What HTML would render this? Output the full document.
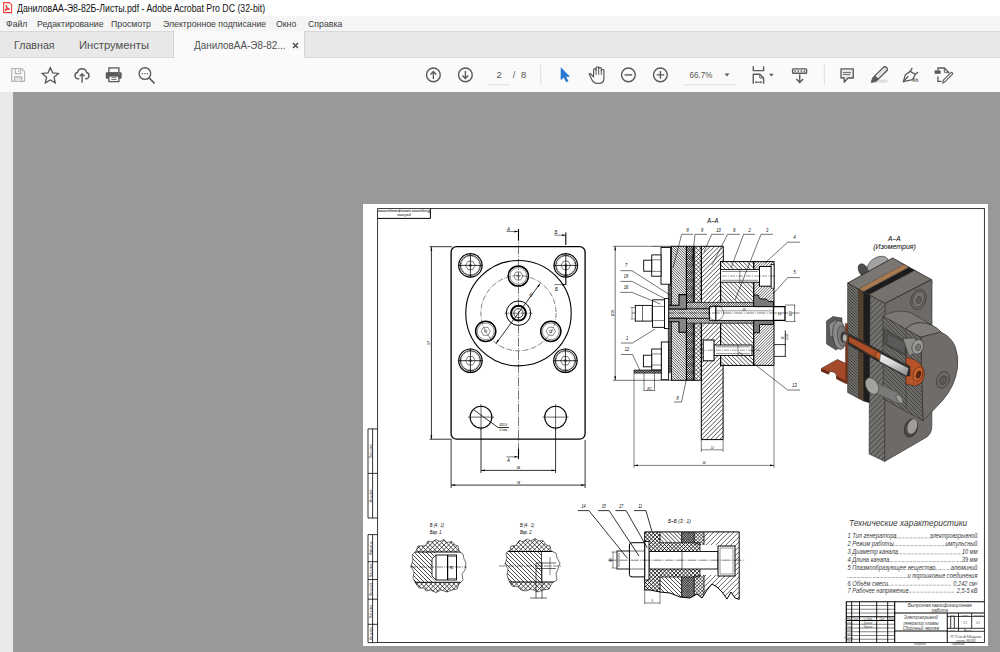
<!DOCTYPE html>
<html><head><meta charset="utf-8">
<style>
html,body{margin:0;padding:0;width:1000px;height:652px;overflow:hidden;background:#999;font-family:"Liberation Sans",sans-serif;}
.a{position:absolute;}
.t{position:absolute;white-space:nowrap;transform-origin:0 0;}
#titlebar{left:0;top:0;width:1000px;height:16px;background:#fff;}
#menubar{left:0;top:16px;width:1000px;height:15px;background:#f5f5f5;}
#tabbar{left:0;top:31px;width:1000px;height:28px;background:#fafafa;}
#tabinact{left:0;top:0;width:174px;height:26px;background:#e8e8e8;border-top:1px solid #d8d8d8;border-bottom:1px solid #d8d8d8;border-right:1px solid #d4d4d4;box-sizing:border-box;height:27px}
#tabinact2{left:304px;top:0;width:696px;height:27px;background:#e8e8e8;border-top:1px solid #d8d8d8;border-bottom:1px solid #d8d8d8;border-left:1px solid #d4d4d4;box-sizing:border-box;}
#toolbar{left:0;top:59px;width:1000px;height:33px;background:#fafafa;}
#leftpanel{left:0;top:92px;width:13px;height:560px;background:#e9e9e9;}
#doc{left:13px;top:92px;width:987px;height:560px;background:#999;}
#page{left:363px;top:204px;width:625px;height:442px;background:#fff;}
.menu{font-size:9.6px;color:#3c3c3c;top:18.3px;transform:scaleX(0.91);}
.tab{font-size:11px;color:#505050;top:38.8px;}
</style></head><body>
<div id="titlebar" class="a">
  <svg class="a" style="left:0;top:0" width="16" height="16" viewBox="0 0 16 16">
    <path d="M3.6 2.6 H9.3 L11.6 4.9 V12.6 H3.6 Z" fill="#fff" stroke="#f0423a" stroke-width="1.1"/>
    <path d="M6 5.2 C6.4 7.5 7.4 8.8 9.6 9.2 C8 9 6.4 9.6 5.3 10.6 C6.5 9 7 7.5 6.6 5.4 Z" fill="none" stroke="#ee3a30" stroke-width="1.1" stroke-linejoin="round"/>
  </svg>
  <span class="t" style="left:17px;top:2.5px;font-size:10px;color:#111;transform:scaleX(0.875)">ДаниловАА-Э8-82Б-Листы.pdf - Adobe Acrobat Pro DC (32-bit)</span>
</div>
<div id="menubar" class="a"></div>
<span class="t menu" style="left:5.5px">Файл</span>
<span class="t menu" style="left:37px">Редактирование</span>
<span class="t menu" style="left:111px">Просмотр</span>
<span class="t menu" style="left:163px">Электронное подписание</span>
<span class="t menu" style="left:276px">Окно</span>
<span class="t menu" style="left:307.5px">Справка</span>

<div id="tabbar" class="a">
  <div id="tabinact" class="a"></div>
  <div id="tabinact2" class="a"></div>
</div>
<span class="t tab" style="left:13.5px;transform:scaleX(0.97)">Главная</span>
<span class="t tab" style="left:79px;transform:scaleX(1.02)">Инструменты</span>
<span class="t tab" style="left:193.5px;transform:scaleX(0.9)">ДаниловАА-Э8-82...</span>
<svg class="a" style="left:290px;top:40px" width="11" height="11"><path d="M3 3 L8 8 M8 3 L3 8" stroke="#505050" stroke-width="1.5"/></svg>

<div id="toolbar" class="a"></div>
<div id="leftpanel" class="a"></div>
<div id="doc" class="a"></div>
<div id="page" class="a"></div>

<!-- TOOLBAR ICONS -->
<svg class="a" style="left:0;top:0" width="1000" height="92" viewBox="0 0 1000 92" id="tbicons">
<g fill="none" stroke="#b3b3b3" stroke-width="1.2" stroke-linejoin="round">
  <path d="M11.7 68.5 H21.4 L24.6 71.7 V81.3 H11.7 Z"/>
  <path d="M15.2 68.5 V73.7 H20.7 V68.5"/>
  <path d="M14.6 81.3 V76.8 H21.7 V81.3" fill="#e2e2e2"/>
</g>
<rect x="18" y="69.6" width="1.1" height="2.4" fill="#b3b3b3"/>
<polygon points="50.3,67.6 52.6,72.8 58.4,73.4 54.0,77.2 55.3,82.9 50.3,79.9 45.3,82.9 46.6,77.2 42.2,73.4 48.0,72.8" fill="none" stroke="#5a5a5a" stroke-width="1.3" stroke-linejoin="miter"/>
<g fill="none" stroke="#5a5a5a" stroke-width="1.4" stroke-linecap="butt">
  <path d="M79.3 78.8 H78.2 A3.2 3.2 0 0 1 77.4 72.5 A4.7 4.7 0 0 1 86.6 72.5 A3.2 3.2 0 0 1 85.9 78.8 H85.2"/>
  <path d="M82.1 82.8 V74"/>
  <path d="M79.7 76.3 L82.1 73.8 L84.5 76.3"/>
</g>
<rect x="108.9" y="67.9" width="10" height="5" fill="none" stroke="#5a5a5a" stroke-width="1.3"/>
<rect x="105.8" y="72.2" width="15.8" height="6.6" rx="1" fill="#5a5a5a"/>
<rect x="108.9" y="76" width="10" height="5.6" fill="#fff" stroke="#5a5a5a" stroke-width="1.3"/>
<path d="M111.3 77.7 H116.5 M111.3 79.5 H116.5" stroke="#5a5a5a" stroke-width="0.8"/>
<circle cx="118.8" cy="73.9" r="0.6" fill="#aaa"/>
<circle cx="144.9" cy="73.6" r="5.8" fill="none" stroke="#5a5a5a" stroke-width="1.4"/>
<path d="M149.2 78 L154 82.8" stroke="#5a5a5a" stroke-width="1.7" stroke-linecap="round"/>
<g fill="#5a5a5a"><rect x="141.8" y="73" width="1.2" height="1.3"/><rect x="144.3" y="73" width="1.2" height="1.3"/><rect x="146.8" y="73" width="1.2" height="1.3"/></g>

<g fill="none" stroke="#5a5a5a" stroke-width="1.4">
  <circle cx="433.4" cy="74.9" r="6.85"/>
  <path d="M433.4 71.5 V78.9 M430.5 74.4 L433.4 71.4 L436.3 74.4"/>
  <circle cx="465.4" cy="74.9" r="6.85"/>
  <path d="M465.4 71 V78.5 M462.5 75.6 L465.4 78.6 L468.3 75.6"/>
</g>
<rect x="488.8" y="84" width="20.2" height="1.4" fill="#e4e4e4"/>
<text x="496.5" y="78.2" font-family="Liberation Sans" font-size="9.4" fill="#555">2</text>
<text x="512.8" y="78.2" font-family="Liberation Sans" font-size="9.4" fill="#555">/</text>
<text x="521" y="78.2" font-family="Liberation Sans" font-size="9.4" fill="#555">8</text>
<rect x="540.2" y="65" width="1" height="19.5" fill="#dcdcdc"/>
<path d="M561 67.7 L561 79.7 L563.8 77.2 L566.3 81.9 L568.1 81.1 L565.7 76.6 L569.5 76.4 Z" fill="#2a76d2" stroke="#2a76d2" stroke-width="0.6" stroke-linejoin="round"/>
<g fill="none" stroke="#5a5a5a" stroke-width="1.2" stroke-linejoin="round" stroke-linecap="round">
  <path d="M589.4 74.6 Q588.7 73.6 589.9 73.7 Q591.4 74 593.6 77 V69.9 Q593.6 68.6 594.8 68.6 Q596.1 68.6 596.1 69.9 V68.1 Q596.1 66.9 597.4 66.9 Q598.7 66.9 598.7 68.1 V68.5 Q598.7 67.3 600 67.3 Q601.3 67.3 601.3 68.6 V70.4 Q601.3 69.3 602.6 69.3 Q603.9 69.3 603.9 70.6 V78.4 Q603.9 83.4 598.6 83.4 H597.3 Q593.9 83.4 591.8 79.6 Z"/>
  <path d="M596.1 69.5 V74.5 M598.7 68.3 V74.5 M601.3 70.2 V74.5" stroke-width="1"/>
</g>
<g fill="none" stroke="#5a5a5a" stroke-width="1.4">
  <circle cx="628.4" cy="74.9" r="6.85"/>
  <path d="M624.6 74.9 H632.2"/>
  <circle cx="660.4" cy="74.9" r="6.85"/>
  <path d="M656.6 74.9 H664.2 M660.4 71.1 V78.7"/>
</g>
<rect x="684" y="84" width="52" height="1.4" fill="#e4e4e4"/>
<text x="689.6" y="78.2" font-family="Liberation Sans" font-size="9.4" fill="#555" transform="translate(689.6 0) scale(0.86 1) translate(-689.6 0)">66.7%</text>
<path d="M724.5 73.6 H729.5 L727 76.4 Z" fill="#5a5a5a"/>
<g fill="none" stroke="#5a5a5a" stroke-width="1.4">
  <path d="M753.3 66.2 V70.6 H763.6 V66.2"/>
  <path d="M753.3 83.8 V74.3 H759.8 L763.6 78 V83.8"/>
  <path d="M759.8 74.3 V78 H763.6" stroke-width="1"/>
</g>
<path d="M755.6 82.2 H761.5" stroke="#5a5a5a" stroke-width="1"/>
<path d="M754.8 82.2 L756.6 80.9 V83.5 Z M762.3 82.2 L760.5 80.9 V83.5 Z" fill="#5a5a5a"/>
<path d="M769.1 73.8 H773.7 L771.4 76.6 Z" fill="#5a5a5a"/>
<rect x="792.6" y="68.9" width="14" height="4.4" rx="0.8" fill="#eee" stroke="#5a5a5a" stroke-width="1.4"/>
<g fill="#5a5a5a"><rect x="794.6" y="70.4" width="1.4" height="1.4"/><rect x="797.6" y="70.4" width="1.4" height="1.4"/><rect x="800.6" y="70.4" width="1.4" height="1.4"/><rect x="803.6" y="70.4" width="1.4" height="1.4"/></g>
<path d="M799.7 74.5 V82.5 M796.3 79.1 L799.7 82.6 L803.1 79.1" fill="none" stroke="#5a5a5a" stroke-width="1.4"/>
<rect x="823.8" y="65" width="1" height="19.5" fill="#dcdcdc"/>
<path d="M841 68.9 H853.3 V78 H848 L844.2 82.2 V78 H841 Z" fill="#e6e6e6" stroke="#5a5a5a" stroke-width="1.3" stroke-linejoin="round"/>
<path d="M843 72.5 H851 M843 74.5 H850" stroke="#5a5a5a" stroke-width="0.8"/>
<rect x="876" y="79.6" width="11.5" height="3" fill="#dedede"/>
<path d="M874.6 75.9 L883.2 67.6 Q884.9 65.9 886.6 67.6 Q888.3 69.3 886.6 71 L878 79.4 Z" fill="#e2e2e2" stroke="#5a5a5a" stroke-width="1.3" stroke-linejoin="round"/>
<path d="M874.6 75.9 L878 79.4 L876 81.6 L871.3 82.4 L872.6 77.9 Z" fill="#5a5a5a" stroke="#5a5a5a" stroke-width="1" stroke-linejoin="round"/>
<g fill="none" stroke="#5a5a5a" stroke-width="1.3" stroke-linejoin="round" stroke-linecap="round">
  <path d="M903.4 81.6 L905.3 74.8 L910.2 71.4 L915.3 74.3 L912.6 79.6 Z"/>
  <path d="M903.4 81.6 L908 76.5"/>
  <path d="M910.2 71.4 L912 68.4 M915.3 74.3 L917.7 72.4"/>
</g>
<text x="912.2" y="82.3" font-family="Liberation Sans" font-size="4.6" font-weight="bold" fill="#5a5a5a">Ah</text>
<rect x="934.6" y="70.4" width="6" height="3.4" fill="#5a5a5a"/>
<g fill="none" stroke="#5a5a5a" stroke-width="1.3" stroke-linejoin="miter">
  <path d="M937.9 70.4 V68 H944.3 L948.6 72.3 V73.5"/>
  <path d="M944.3 68 V72.3 H948.6" stroke-width="1"/>
  <path d="M937.9 76.4 V81.4 H941.5"/>
  <path d="M942.8 82.9 L943.3 80.2 L950.7 72.8 Q951.5 72 952.3 72.8 Q953.1 73.6 952.3 74.4 L944.9 81.8 Z" stroke-width="1.1"/>
</g>
</svg>

<!-- DRAWING -->
<svg class="a" style="left:0;top:0" width="1000" height="652" viewBox="0 0 1000 652" id="drawing">

<defs>
<pattern id="hs" width="3.6" height="3.6" patternUnits="userSpaceOnUse" patternTransform="rotate(45)"><rect width="0.6" height="3.6" x="1.5" fill="#000"/></pattern>
<pattern id="hb" width="3.6" height="3.6" patternUnits="userSpaceOnUse" patternTransform="rotate(-45)"><rect width="0.6" height="3.6" x="1.5" fill="#000"/></pattern>
<pattern id="hbf" width="1.9" height="1.9" patternUnits="userSpaceOnUse" patternTransform="rotate(-45)"><rect width="0.5" height="1.9" x="0.7" fill="#000"/></pattern>
<pattern id="hsf" width="2.2" height="2.2" patternUnits="userSpaceOnUse" patternTransform="rotate(45)"><rect width="0.5" height="2.2" x="0.8" fill="#000"/></pattern>
<pattern id="hx" width="2.8" height="2.8" patternUnits="userSpaceOnUse" patternTransform="rotate(45)"><rect width="0.5" height="2.8" x="1.1" fill="#000"/><rect height="0.5" width="2.8" y="1.1" fill="#000"/></pattern>
<pattern id="hxd" width="1.5" height="1.5" patternUnits="userSpaceOnUse" patternTransform="rotate(45)"><rect width="0.55" height="1.5" x="0.5" fill="#000"/><rect height="0.55" width="1.5" y="0.5" fill="#000"/></pattern>
<pattern id="isoh" width="4" height="4" patternUnits="userSpaceOnUse" patternTransform="rotate(-40)"><rect width="4" height="4" fill="#6c6966"/><rect width="0.6" height="4" x="1.7" fill="#2a2a2a"/></pattern>
<pattern id="isohs" width="3" height="3" patternUnits="userSpaceOnUse" patternTransform="rotate(60)"><rect width="3" height="3" fill="#646260"/><rect width="0.55" height="3" x="1.2" fill="#2a2a2a"/></pattern>
<pattern id="isob" width="2" height="2" patternUnits="userSpaceOnUse" patternTransform="rotate(45)"><rect width="2" height="2" fill="#7a5a3c"/><rect width="0.6" height="2" x="0.7" fill="#2a2018"/><rect height="0.6" width="2" y="0.7" fill="#2a2018"/></pattern>
<linearGradient id="cer" x1="0" y1="0" x2="0.3" y2="1"><stop offset="0" stop-color="#f4f4f4"/><stop offset="0.5" stop-color="#d8d8d8"/><stop offset="1" stop-color="#9a9a9a"/></linearGradient>
<linearGradient id="boltg" x1="0" y1="0" x2="0" y2="1"><stop offset="0" stop-color="#9a9896"/><stop offset="0.5" stop-color="#c4c2c0"/><stop offset="1" stop-color="#6e6c6a"/></linearGradient>
</defs>

<rect x="451.1" y="246.7" width="134" height="192.5" rx="5.5" fill="none" stroke="#000" stroke-width="1.3"/>
<circle cx="518.5" cy="313.2" r="52.7" fill="none" stroke="#000" stroke-width="1.1"/>
<circle cx="518.5" cy="313.2" r="37.6" fill="none" stroke="#000" stroke-width="0.5" stroke-dasharray="5 1.2 0.8 1.2"/>
<circle cx="518.5" cy="313.2" r="12.2" fill="none" stroke="#000" stroke-width="1"/>
<circle cx="518.5" cy="313.2" r="7.4" fill="none" stroke="#000" stroke-width="2"/>
<circle cx="518.5" cy="313.2" r="4.6" fill="none" stroke="#000" stroke-width="0.7"/>
<circle cx="518.3" cy="276.0" r="10.1" fill="none" stroke="#000" stroke-width="1.5"/>
<circle cx="518.3" cy="276.0" r="8.4" fill="none" stroke="#000" stroke-width="0.45"/>
<polygon points="522.90,276.00 520.60,279.98 516.00,279.98 513.70,276.00 516.00,272.02 520.60,272.02" fill="none" stroke="#000" stroke-width="0.45"/>
<circle cx="518.3" cy="276.0" r="1.3" fill="none" stroke="#000" stroke-width="0.4"/>
<circle cx="485.7" cy="331.3" r="10.1" fill="none" stroke="#000" stroke-width="1.5"/>
<circle cx="485.7" cy="331.3" r="8.4" fill="none" stroke="#000" stroke-width="0.45"/>
<polygon points="490.30,331.30 488.00,335.28 483.40,335.28 481.10,331.30 483.40,327.32 488.00,327.32" fill="none" stroke="#000" stroke-width="0.45"/>
<circle cx="485.7" cy="331.3" r="1.3" fill="none" stroke="#000" stroke-width="0.4"/>
<circle cx="550.8" cy="331.3" r="10.1" fill="none" stroke="#000" stroke-width="1.5"/>
<circle cx="550.8" cy="331.3" r="8.4" fill="none" stroke="#000" stroke-width="0.45"/>
<polygon points="555.40,331.30 553.10,335.28 548.50,335.28 546.20,331.30 548.50,327.32 553.10,327.32" fill="none" stroke="#000" stroke-width="0.45"/>
<circle cx="550.8" cy="331.3" r="1.3" fill="none" stroke="#000" stroke-width="0.4"/>
<circle cx="470.4" cy="265.4" r="11.7" fill="none" stroke="#000" stroke-width="1.2"/>
<circle cx="470.4" cy="265.4" r="10.1" fill="none" stroke="#000" stroke-width="0.8" fill="none"/>
<circle cx="470.4" cy="265.4" r="9.2" fill="none" stroke="#000" stroke-width="0.4" stroke-dasharray="2 1"/>
<polygon points="475.20,265.40 472.80,269.56 468.00,269.56 465.60,265.40 468.00,261.24 472.80,261.24" fill="none" stroke="#000" stroke-width="0.5"/>
<circle cx="470.4" cy="265.4" r="1.2" fill="none" stroke="#000" stroke-width="0.4"/>
<path d="M457.9 265.4 H482.9 M470.4 252.89999999999998 V277.9" stroke="#000" stroke-width="0.8" fill="none"/>
<circle cx="565.8" cy="265.4" r="11.7" fill="none" stroke="#000" stroke-width="1.2"/>
<circle cx="565.8" cy="265.4" r="10.1" fill="none" stroke="#000" stroke-width="0.8" fill="none"/>
<circle cx="565.8" cy="265.4" r="9.2" fill="none" stroke="#000" stroke-width="0.4" stroke-dasharray="2 1"/>
<polygon points="570.60,265.40 568.20,269.56 563.40,269.56 561.00,265.40 563.40,261.24 568.20,261.24" fill="none" stroke="#000" stroke-width="0.5"/>
<circle cx="565.8" cy="265.4" r="1.2" fill="none" stroke="#000" stroke-width="0.4"/>
<path d="M553.3 265.4 H578.3 M565.8 252.89999999999998 V277.9" stroke="#000" stroke-width="0.8" fill="none"/>
<circle cx="470.4" cy="360.7" r="11.7" fill="none" stroke="#000" stroke-width="1.2"/>
<circle cx="470.4" cy="360.7" r="10.1" fill="none" stroke="#000" stroke-width="0.8" fill="none"/>
<circle cx="470.4" cy="360.7" r="9.2" fill="none" stroke="#000" stroke-width="0.4" stroke-dasharray="2 1"/>
<polygon points="475.20,360.70 472.80,364.86 468.00,364.86 465.60,360.70 468.00,356.54 472.80,356.54" fill="none" stroke="#000" stroke-width="0.5"/>
<circle cx="470.4" cy="360.7" r="1.2" fill="none" stroke="#000" stroke-width="0.4"/>
<path d="M457.9 360.7 H482.9 M470.4 348.2 V373.2" stroke="#000" stroke-width="0.8" fill="none"/>
<circle cx="565.4" cy="360.7" r="11.7" fill="none" stroke="#000" stroke-width="1.2"/>
<circle cx="565.4" cy="360.7" r="10.1" fill="none" stroke="#000" stroke-width="0.8" fill="none"/>
<circle cx="565.4" cy="360.7" r="9.2" fill="none" stroke="#000" stroke-width="0.4" stroke-dasharray="2 1"/>
<polygon points="570.20,360.70 567.80,364.86 563.00,364.86 560.60,360.70 563.00,356.54 567.80,356.54" fill="none" stroke="#000" stroke-width="0.5"/>
<circle cx="565.4" cy="360.7" r="1.2" fill="none" stroke="#000" stroke-width="0.4"/>
<path d="M552.9 360.7 H577.9 M565.4 348.2 V373.2" stroke="#000" stroke-width="0.8" fill="none"/>
<circle cx="481.0" cy="417.1" r="10.9" fill="none" stroke="#000" stroke-width="1.1"/>
<path d="M468.0 417.1 H494.0 M481.0 404.1 V430.1" stroke="#000" stroke-width="0.6"/>
<circle cx="555.6" cy="417.1" r="10.9" fill="none" stroke="#000" stroke-width="1.1"/>
<path d="M542.6 417.1 H568.6 M555.6 404.1 V430.1" stroke="#000" stroke-width="0.6"/>
<path d="M518.5 232 V459" stroke="#000" stroke-width="0.55" stroke-dasharray="9 1.5 1.2 1.5"/>
<path d="M504.5 313.2 H532.5" stroke="#000" stroke-width="0.5" stroke-dasharray="5 1 1 1"/>
<path d="M496 343.6 L540.1 283.5" stroke="#000" stroke-width="0.8"/>
<path d="M540.1 283.5 L538.6 287.3 L537.2 286.3 Z M496 343.6 L497.5 339.8 L498.9 340.8 Z" fill="#000"/>
<text transform="translate(531 297.5) rotate(-54) scale(0.8 1)" font-family="Liberation Sans" font-size="4.2" font-style="italic" text-anchor="start" fill="#000" >Ø2</text>
<path d="M431.4 246.7 V439.2 M429.5 246.7 H452 M429.5 439.2 H452" stroke="#000" stroke-width="0.8" fill="none"/>
<path d="M431.4 246.7 l-0.9 4 h1.8 Z M431.4 439.2 l-0.9 -4 h1.8 Z" fill="#000"/>
<text transform="translate(430 343) rotate(-90) scale(0.8 1)" font-family="Liberation Sans" font-size="4.2" font-style="italic" text-anchor="middle" fill="#000" >57</text>
<path d="M481 428 V473 M555.6 428 V473 M481 470.4 H555.6" stroke="#000" stroke-width="0.8" fill="none"/>
<path d="M481 470.4 l4 -0.9 v1.8 Z M555.6 470.4 l-4 -0.9 v1.8 Z" fill="#000"/>
<text transform="translate(518.3 469.3) scale(0.8 1)" font-family="Liberation Sans" font-size="4.0" font-style="italic" text-anchor="middle" fill="#000" >34</text>
<path d="M451.1 440 V488 M585.1 440 V488 M451.1 485.1 H585.1" stroke="#000" stroke-width="0.8" fill="none"/>
<path d="M451.1 485.1 l4 -0.9 v1.8 Z M585.1 485.1 l-4 -0.9 v1.8 Z" fill="#000"/>
<text transform="translate(518.3 484) scale(0.8 1)" font-family="Liberation Sans" font-size="4.0" font-style="italic" text-anchor="middle" fill="#000" >74</text>
<path d="M518.5 229 V240.5" stroke="#000" stroke-width="1.1"/>
<path d="M506.5 231.5 H518" stroke="#000" stroke-width="0.5"/><path d="M518 231.5 l-3.5 -0.9 v1.8 Z" fill="#000"/>
<text transform="translate(507 230.5) scale(0.8 1)" font-family="Liberation Sans" font-size="5.6" font-style="italic" text-anchor="start" fill="#000" >А</text>
<path d="M518.5 449 V459" stroke="#000" stroke-width="1.1"/>
<path d="M506.5 456.8 H518" stroke="#000" stroke-width="0.5"/><path d="M518 456.8 l-3.5 -0.9 v1.8 Z" fill="#000"/>
<text transform="translate(507 462.2) scale(0.8 1)" font-family="Liberation Sans" font-size="5.6" font-style="italic" text-anchor="start" fill="#000" >А</text>
<path d="M565.8 232.5 V245" stroke="#000" stroke-width="1.1"/>
<path d="M554.2 235.2 H565.5" stroke="#000" stroke-width="0.5"/><path d="M565.5 235.2 l-3.5 -0.9 v1.8 Z" fill="#000"/>
<text transform="translate(554.5 234) scale(0.8 1)" font-family="Liberation Sans" font-size="5.6" font-style="italic" text-anchor="start" fill="#000" >Б</text>
<path d="M565.8 265 V285" stroke="#000" stroke-width="1.1"/>
<path d="M554.2 284.6 H565.5" stroke="#000" stroke-width="0.5"/><path d="M565.5 284.6 l-3.5 -0.9 v1.8 Z" fill="#000"/>
<text transform="translate(555 290.5) scale(0.8 1)" font-family="Liberation Sans" font-size="5.6" font-style="italic" text-anchor="start" fill="#000" >Б</text>
<path d="M474 410 L498 427.5 H509" stroke="#000" stroke-width="0.8" fill="none"/>
<text transform="translate(499.5 426.3) scale(0.75 1)" font-family="Liberation Sans" font-size="3.8" font-style="italic" text-anchor="start" fill="#000" >Ø10,5</text>
<text transform="translate(499.5 431) scale(0.75 1)" font-family="Liberation Sans" font-size="3.8" font-style="italic" text-anchor="start" fill="#000" >2 отв.</text>
<rect x="377.6" y="208.6" width="606.8" height="433.9" fill="none" stroke="#222" stroke-width="0.9"/>
<path d="M377.6 218.4 H430.4 V208.6" fill="none" stroke="#000" stroke-width="1"/>
<text transform="translate(404 209.6) rotate(180) scale(0.88 1)" font-family="Liberation Sans" font-size="4.2" font-style="italic" text-anchor="middle" fill="#000" >Выпускная квалификационная</text>
<text transform="translate(404 214.2) rotate(180) scale(0.88 1)" font-family="Liberation Sans" font-size="4.2" font-style="italic" text-anchor="middle" fill="#000" >работа</text>
<path d="M368 428.9 V518 H377.6 M368 428.9 H377.6 M372.6 428.9 V518 M368 473.4 H377.6" fill="none" stroke="#000" stroke-width="0.8"/>
<path d="M368 534.6 V642.6 H377.6 M368 534.6 H377.6 M372.6 534.6 V642.6 M368 561.7 H377.6 M368 579.5 H377.6 M368 599.2 H377.6 M368 624.3 H377.6" fill="none" stroke="#000" stroke-width="0.8"/>
<text transform="translate(371.5 451) rotate(-90) scale(0.8 1)" font-family="Liberation Sans" font-size="2.6" font-style="italic" text-anchor="middle" fill="#000" >Подп. и дата</text>
<text transform="translate(371.5 496) rotate(-90) scale(0.8 1)" font-family="Liberation Sans" font-size="2.6" font-style="italic" text-anchor="middle" fill="#000" >Инв. № дубл.</text>
<text transform="translate(371.5 548) rotate(-90) scale(0.8 1)" font-family="Liberation Sans" font-size="2.6" font-style="italic" text-anchor="middle" fill="#000" >Взам. инв. №</text>
<text transform="translate(371.5 570.5) rotate(-90) scale(0.8 1)" font-family="Liberation Sans" font-size="2.6" font-style="italic" text-anchor="middle" fill="#000" >Подп. и дата</text>
<text transform="translate(371.5 589) rotate(-90) scale(0.8 1)" font-family="Liberation Sans" font-size="2.6" font-style="italic" text-anchor="middle" fill="#000" >Инв. № подл.</text>
<text transform="translate(371.5 611.5) rotate(-90) scale(0.8 1)" font-family="Liberation Sans" font-size="2.6" font-style="italic" text-anchor="middle" fill="#000" >Подп. и дата</text>
<text transform="translate(371.5 633.5) rotate(-90) scale(0.8 1)" font-family="Liberation Sans" font-size="2.6" font-style="italic" text-anchor="middle" fill="#000" >Инв. № подл.</text>
<text transform="translate(712.8 222.6) scale(0.9 1)" font-family="Liberation Sans" font-size="6.4" font-style="italic" text-anchor="middle" fill="#000" >А–А</text>
<path d="M615.2 246.3 V380.3 M613 246.3 H652 M613 380.3 H672" fill="none" stroke="#000" stroke-width="0.55" />
<path d="M615.2 246.3 l-0.9 4 h1.8 Z M615.2 380.3 l-0.9 -4 h1.8 Z" fill="#000"/>
<text transform="translate(613.6 313) rotate(-90) scale(0.8 1)" font-family="Liberation Sans" font-size="4.2" font-style="italic" text-anchor="middle" fill="#000" >Ø36</text>
<path d="M652 246.3 H671.4" fill="none" stroke="#000" stroke-width="0.7" />
<clipPath id="c1"><path d="M671.4 246.3H686.4V380.3H671.4Z"/></clipPath><path clip-path="url(#c1)" d="M537.40 246.30L671.40 380.30M539.90 246.30L673.90 380.30M542.40 246.30L676.40 380.30M544.90 246.30L678.90 380.30M547.40 246.30L681.40 380.30M549.90 246.30L683.90 380.30M552.40 246.30L686.40 380.30M554.90 246.30L688.90 380.30M557.40 246.30L691.40 380.30M559.90 246.30L693.90 380.30M562.40 246.30L696.40 380.30M564.90 246.30L698.90 380.30M567.40 246.30L701.40 380.30M569.90 246.30L703.90 380.30M572.40 246.30L706.40 380.30M574.90 246.30L708.90 380.30M577.40 246.30L711.40 380.30M579.90 246.30L713.90 380.30M582.40 246.30L716.40 380.30M584.90 246.30L718.90 380.30M587.40 246.30L721.40 380.30M589.90 246.30L723.90 380.30M592.40 246.30L726.40 380.30M594.90 246.30L728.90 380.30M597.40 246.30L731.40 380.30M599.90 246.30L733.90 380.30M602.40 246.30L736.40 380.30M604.90 246.30L738.90 380.30M607.40 246.30L741.40 380.30M609.90 246.30L743.90 380.30M612.40 246.30L746.40 380.30M614.90 246.30L748.90 380.30M617.40 246.30L751.40 380.30M619.90 246.30L753.90 380.30M622.40 246.30L756.40 380.30M624.90 246.30L758.90 380.30M627.40 246.30L761.40 380.30M629.90 246.30L763.90 380.30M632.40 246.30L766.40 380.30M634.90 246.30L768.90 380.30M637.40 246.30L771.40 380.30M639.90 246.30L773.90 380.30M642.40 246.30L776.40 380.30M644.90 246.30L778.90 380.30M647.40 246.30L781.40 380.30M649.90 246.30L783.90 380.30M652.40 246.30L786.40 380.30M654.90 246.30L788.90 380.30M657.40 246.30L791.40 380.30M659.90 246.30L793.90 380.30M662.40 246.30L796.40 380.30M664.90 246.30L798.90 380.30M667.40 246.30L801.40 380.30M669.90 246.30L803.90 380.30M672.40 246.30L806.40 380.30M674.90 246.30L808.90 380.30M677.40 246.30L811.40 380.30M679.90 246.30L813.90 380.30M682.40 246.30L816.40 380.30M684.90 246.30L818.90 380.30" stroke="#000" stroke-width="0.68" fill="none"/>
<rect x="671.4" y="246.3" width="15.00" height="134.00" fill="none" stroke="#000" stroke-width="1.0" />
<clipPath id="c2"><path d="M686.4 246.3H694V380.3H686.4Z"/></clipPath><path clip-path="url(#c2)" d="M552.40 380.30L686.40 246.30M554.70 380.30L688.70 246.30M557.00 380.30L691.00 246.30M559.30 380.30L693.30 246.30M561.60 380.30L695.60 246.30M563.90 380.30L697.90 246.30M566.20 380.30L700.20 246.30M568.50 380.30L702.50 246.30M570.80 380.30L704.80 246.30M573.10 380.30L707.10 246.30M575.40 380.30L709.40 246.30M577.70 380.30L711.70 246.30M580.00 380.30L714.00 246.30M582.30 380.30L716.30 246.30M584.60 380.30L718.60 246.30M586.90 380.30L720.90 246.30M589.20 380.30L723.20 246.30M591.50 380.30L725.50 246.30M593.80 380.30L727.80 246.30M596.10 380.30L730.10 246.30M598.40 380.30L732.40 246.30M600.70 380.30L734.70 246.30M603.00 380.30L737.00 246.30M605.30 380.30L739.30 246.30M607.60 380.30L741.60 246.30M609.90 380.30L743.90 246.30M612.20 380.30L746.20 246.30M614.50 380.30L748.50 246.30M616.80 380.30L750.80 246.30M619.10 380.30L753.10 246.30M621.40 380.30L755.40 246.30M623.70 380.30L757.70 246.30M626.00 380.30L760.00 246.30M628.30 380.30L762.30 246.30M630.60 380.30L764.60 246.30M632.90 380.30L766.90 246.30M635.20 380.30L769.20 246.30M637.50 380.30L771.50 246.30M639.80 380.30L773.80 246.30M642.10 380.30L776.10 246.30M644.40 380.30L778.40 246.30M646.70 380.30L780.70 246.30M649.00 380.30L783.00 246.30M651.30 380.30L785.30 246.30M653.60 380.30L787.60 246.30M655.90 380.30L789.90 246.30M658.20 380.30L792.20 246.30M660.50 380.30L794.50 246.30M662.80 380.30L796.80 246.30M665.10 380.30L799.10 246.30M667.40 380.30L801.40 246.30M669.70 380.30L803.70 246.30M672.00 380.30L806.00 246.30M674.30 380.30L808.30 246.30M676.60 380.30L810.60 246.30M678.90 380.30L812.90 246.30M681.20 380.30L815.20 246.30M683.50 380.30L817.50 246.30M685.80 380.30L819.80 246.30M688.10 380.30L822.10 246.30M690.40 380.30L824.40 246.30M692.70 380.30L826.70 246.30M552.40 246.30L686.40 380.30M554.70 246.30L688.70 380.30M557.00 246.30L691.00 380.30M559.30 246.30L693.30 380.30M561.60 246.30L695.60 380.30M563.90 246.30L697.90 380.30M566.20 246.30L700.20 380.30M568.50 246.30L702.50 380.30M570.80 246.30L704.80 380.30M573.10 246.30L707.10 380.30M575.40 246.30L709.40 380.30M577.70 246.30L711.70 380.30M580.00 246.30L714.00 380.30M582.30 246.30L716.30 380.30M584.60 246.30L718.60 380.30M586.90 246.30L720.90 380.30M589.20 246.30L723.20 380.30M591.50 246.30L725.50 380.30M593.80 246.30L727.80 380.30M596.10 246.30L730.10 380.30M598.40 246.30L732.40 380.30M600.70 246.30L734.70 380.30M603.00 246.30L737.00 380.30M605.30 246.30L739.30 380.30M607.60 246.30L741.60 380.30M609.90 246.30L743.90 380.30M612.20 246.30L746.20 380.30M614.50 246.30L748.50 380.30M616.80 246.30L750.80 380.30M619.10 246.30L753.10 380.30M621.40 246.30L755.40 380.30M623.70 246.30L757.70 380.30M626.00 246.30L760.00 380.30M628.30 246.30L762.30 380.30M630.60 246.30L764.60 380.30M632.90 246.30L766.90 380.30M635.20 246.30L769.20 380.30M637.50 246.30L771.50 380.30M639.80 246.30L773.80 380.30M642.10 246.30L776.10 380.30M644.40 246.30L778.40 380.30M646.70 246.30L780.70 380.30M649.00 246.30L783.00 380.30M651.30 246.30L785.30 380.30M653.60 246.30L787.60 380.30M655.90 246.30L789.90 380.30M658.20 246.30L792.20 380.30M660.50 246.30L794.50 380.30M662.80 246.30L796.80 380.30M665.10 246.30L799.10 380.30M667.40 246.30L801.40 380.30M669.70 246.30L803.70 380.30M672.00 246.30L806.00 380.30M674.30 246.30L808.30 380.30M676.60 246.30L810.60 380.30M678.90 246.30L812.90 380.30M681.20 246.30L815.20 380.30M683.50 246.30L817.50 380.30M685.80 246.30L819.80 380.30M688.10 246.30L822.10 380.30M690.40 246.30L824.40 380.30M692.70 246.30L826.70 380.30" stroke="#000" stroke-width="0.75" fill="none"/>
<rect x="686.4" y="246.3" width="7.60" height="134.00" fill="none" stroke="#000" stroke-width="1.0" />
<clipPath id="c3"><path d="M694 246.3H701.3V380.3H694Z"/></clipPath><path clip-path="url(#c3)" d="M560.00 380.30L694.00 246.30M564.20 380.30L698.20 246.30M568.40 380.30L702.40 246.30M572.60 380.30L706.60 246.30M576.80 380.30L710.80 246.30M581.00 380.30L715.00 246.30M585.20 380.30L719.20 246.30M589.40 380.30L723.40 246.30M593.60 380.30L727.60 246.30M597.80 380.30L731.80 246.30M602.00 380.30L736.00 246.30M606.20 380.30L740.20 246.30M610.40 380.30L744.40 246.30M614.60 380.30L748.60 246.30M618.80 380.30L752.80 246.30M623.00 380.30L757.00 246.30M627.20 380.30L761.20 246.30M631.40 380.30L765.40 246.30M635.60 380.30L769.60 246.30M639.80 380.30L773.80 246.30M644.00 380.30L778.00 246.30M648.20 380.30L782.20 246.30M652.40 380.30L786.40 246.30M656.60 380.30L790.60 246.30M660.80 380.30L794.80 246.30M665.00 380.30L799.00 246.30M669.20 380.30L803.20 246.30M673.40 380.30L807.40 246.30M677.60 380.30L811.60 246.30M681.80 380.30L815.80 246.30M686.00 380.30L820.00 246.30M690.20 380.30L824.20 246.30M694.40 380.30L828.40 246.30M698.60 380.30L832.60 246.30M560.00 246.30L694.00 380.30M564.20 246.30L698.20 380.30M568.40 246.30L702.40 380.30M572.60 246.30L706.60 380.30M576.80 246.30L710.80 380.30M581.00 246.30L715.00 380.30M585.20 246.30L719.20 380.30M589.40 246.30L723.40 380.30M593.60 246.30L727.60 380.30M597.80 246.30L731.80 380.30M602.00 246.30L736.00 380.30M606.20 246.30L740.20 380.30M610.40 246.30L744.40 380.30M614.60 246.30L748.60 380.30M618.80 246.30L752.80 380.30M623.00 246.30L757.00 380.30M627.20 246.30L761.20 380.30M631.40 246.30L765.40 380.30M635.60 246.30L769.60 380.30M639.80 246.30L773.80 380.30M644.00 246.30L778.00 380.30M648.20 246.30L782.20 380.30M652.40 246.30L786.40 380.30M656.60 246.30L790.60 380.30M660.80 246.30L794.80 380.30M665.00 246.30L799.00 380.30M669.20 246.30L803.20 380.30M673.40 246.30L807.40 380.30M677.60 246.30L811.60 380.30M681.80 246.30L815.80 380.30M686.00 246.30L820.00 380.30M690.20 246.30L824.20 380.30M694.40 246.30L828.40 380.30M698.60 246.30L832.60 380.30" stroke="#000" stroke-width="0.62" fill="none"/>
<rect x="694.0" y="246.3" width="7.30" height="134.00" fill="none" stroke="#000" stroke-width="0.9" />
<clipPath id="c4"><path d="M701.3 246.3 H723.3 V261.6 H720.6 V365.4 H723.1 V439.6 H701.3 Z"/></clipPath><path clip-path="url(#c4)" d="M508.00 439.60L701.30 246.30M512.50 439.60L705.80 246.30M517.00 439.60L710.30 246.30M521.50 439.60L714.80 246.30M526.00 439.60L719.30 246.30M530.50 439.60L723.80 246.30M535.00 439.60L728.30 246.30M539.50 439.60L732.80 246.30M544.00 439.60L737.30 246.30M548.50 439.60L741.80 246.30M553.00 439.60L746.30 246.30M557.50 439.60L750.80 246.30M562.00 439.60L755.30 246.30M566.50 439.60L759.80 246.30M571.00 439.60L764.30 246.30M575.50 439.60L768.80 246.30M580.00 439.60L773.30 246.30M584.50 439.60L777.80 246.30M589.00 439.60L782.30 246.30M593.50 439.60L786.80 246.30M598.00 439.60L791.30 246.30M602.50 439.60L795.80 246.30M607.00 439.60L800.30 246.30M611.50 439.60L804.80 246.30M616.00 439.60L809.30 246.30M620.50 439.60L813.80 246.30M625.00 439.60L818.30 246.30M629.50 439.60L822.80 246.30M634.00 439.60L827.30 246.30M638.50 439.60L831.80 246.30M643.00 439.60L836.30 246.30M647.50 439.60L840.80 246.30M652.00 439.60L845.30 246.30M656.50 439.60L849.80 246.30M661.00 439.60L854.30 246.30M665.50 439.60L858.80 246.30M670.00 439.60L863.30 246.30M674.50 439.60L867.80 246.30M679.00 439.60L872.30 246.30M683.50 439.60L876.80 246.30M688.00 439.60L881.30 246.30M692.50 439.60L885.80 246.30M697.00 439.60L890.30 246.30M701.50 439.60L894.80 246.30M706.00 439.60L899.30 246.30M710.50 439.60L903.80 246.30M715.00 439.60L908.30 246.30M719.50 439.60L912.80 246.30" stroke="#000" stroke-width="0.68" fill="none"/>
<path d="M701.3 246.3 H723.3 V261.6 H720.6 V365.4 H723.1 V439.6 H701.3 Z" fill="none" stroke="#000" stroke-width="1.0" />
<clipPath id="c5"><path d="M720.6 261.6H753.7V365.4H720.6Z"/></clipPath><path clip-path="url(#c5)" d="M616.80 261.60L720.60 365.40M621.00 261.60L724.80 365.40M625.20 261.60L729.00 365.40M629.40 261.60L733.20 365.40M633.60 261.60L737.40 365.40M637.80 261.60L741.60 365.40M642.00 261.60L745.80 365.40M646.20 261.60L750.00 365.40M650.40 261.60L754.20 365.40M654.60 261.60L758.40 365.40M658.80 261.60L762.60 365.40M663.00 261.60L766.80 365.40M667.20 261.60L771.00 365.40M671.40 261.60L775.20 365.40M675.60 261.60L779.40 365.40M679.80 261.60L783.60 365.40M684.00 261.60L787.80 365.40M688.20 261.60L792.00 365.40M692.40 261.60L796.20 365.40M696.60 261.60L800.40 365.40M700.80 261.60L804.60 365.40M705.00 261.60L808.80 365.40M709.20 261.60L813.00 365.40M713.40 261.60L817.20 365.40M717.60 261.60L821.40 365.40M721.80 261.60L825.60 365.40M726.00 261.60L829.80 365.40M730.20 261.60L834.00 365.40M734.40 261.60L838.20 365.40M738.60 261.60L842.40 365.40M742.80 261.60L846.60 365.40M747.00 261.60L850.80 365.40M751.20 261.60L855.00 365.40" stroke="#000" stroke-width="0.68" fill="none"/>
<rect x="720.6" y="261.6" width="33.10" height="103.80" fill="none" stroke="#000" stroke-width="1.0" />
<clipPath id="c6"><path d="M753.7 261.6H774V365.4H753.7Z"/></clipPath><path clip-path="url(#c6)" d="M649.90 365.40L753.70 261.60M652.70 365.40L756.50 261.60M655.50 365.40L759.30 261.60M658.30 365.40L762.10 261.60M661.10 365.40L764.90 261.60M663.90 365.40L767.70 261.60M666.70 365.40L770.50 261.60M669.50 365.40L773.30 261.60M672.30 365.40L776.10 261.60M675.10 365.40L778.90 261.60M677.90 365.40L781.70 261.60M680.70 365.40L784.50 261.60M683.50 365.40L787.30 261.60M686.30 365.40L790.10 261.60M689.10 365.40L792.90 261.60M691.90 365.40L795.70 261.60M694.70 365.40L798.50 261.60M697.50 365.40L801.30 261.60M700.30 365.40L804.10 261.60M703.10 365.40L806.90 261.60M705.90 365.40L809.70 261.60M708.70 365.40L812.50 261.60M711.50 365.40L815.30 261.60M714.30 365.40L818.10 261.60M717.10 365.40L820.90 261.60M719.90 365.40L823.70 261.60M722.70 365.40L826.50 261.60M725.50 365.40L829.30 261.60M728.30 365.40L832.10 261.60M731.10 365.40L834.90 261.60M733.90 365.40L837.70 261.60M736.70 365.40L840.50 261.60M739.50 365.40L843.30 261.60M742.30 365.40L846.10 261.60M745.10 365.40L848.90 261.60M747.90 365.40L851.70 261.60M750.70 365.40L854.50 261.60M753.50 365.40L857.30 261.60M756.30 365.40L860.10 261.60M759.10 365.40L862.90 261.60M761.90 365.40L865.70 261.60M764.70 365.40L868.50 261.60M767.50 365.40L871.30 261.60M770.30 365.40L874.10 261.60M773.10 365.40L876.90 261.60" stroke="#000" stroke-width="0.62" fill="none"/>
<rect x="753.7" y="261.6" width="20.30" height="103.80" fill="none" stroke="#000" stroke-width="1.0" />
<path d="M701.3 439.6 V452 M723.1 439.6 V452 M701.3 449.8 H723.1" fill="none" stroke="#000" stroke-width="0.5" />
<text transform="translate(712.2 448.8) scale(0.85 1)" font-family="Liberation Sans" font-size="3" font-style="italic" text-anchor="middle" fill="#000" >12</text>
<path d="M668.3 250 V370 H634 V373.2 H667.5 Q671.4 373.2 671.4 369 V250 Z" fill="#fff"/>
<clipPath id="c7"><path d="M668.3 250 V370 H634 V373.2 H667.5 Q671.4 373.2 671.4 369 V250 Z"/></clipPath><path clip-path="url(#c7)" d="M510.80 373.20L634.00 250.00M512.40 373.20L635.60 250.00M514.00 373.20L637.20 250.00M515.60 373.20L638.80 250.00M517.20 373.20L640.40 250.00M518.80 373.20L642.00 250.00M520.40 373.20L643.60 250.00M522.00 373.20L645.20 250.00M523.60 373.20L646.80 250.00M525.20 373.20L648.40 250.00M526.80 373.20L650.00 250.00M528.40 373.20L651.60 250.00M530.00 373.20L653.20 250.00M531.60 373.20L654.80 250.00M533.20 373.20L656.40 250.00M534.80 373.20L658.00 250.00M536.40 373.20L659.60 250.00M538.00 373.20L661.20 250.00M539.60 373.20L662.80 250.00M541.20 373.20L664.40 250.00M542.80 373.20L666.00 250.00M544.40 373.20L667.60 250.00M546.00 373.20L669.20 250.00M547.60 373.20L670.80 250.00M549.20 373.20L672.40 250.00M550.80 373.20L674.00 250.00M552.40 373.20L675.60 250.00M554.00 373.20L677.20 250.00M555.60 373.20L678.80 250.00M557.20 373.20L680.40 250.00M558.80 373.20L682.00 250.00M560.40 373.20L683.60 250.00M562.00 373.20L685.20 250.00M563.60 373.20L686.80 250.00M565.20 373.20L688.40 250.00M566.80 373.20L690.00 250.00M568.40 373.20L691.60 250.00M570.00 373.20L693.20 250.00M571.60 373.20L694.80 250.00M573.20 373.20L696.40 250.00M574.80 373.20L698.00 250.00M576.40 373.20L699.60 250.00M578.00 373.20L701.20 250.00M579.60 373.20L702.80 250.00M581.20 373.20L704.40 250.00M582.80 373.20L706.00 250.00M584.40 373.20L707.60 250.00M586.00 373.20L709.20 250.00M587.60 373.20L710.80 250.00M589.20 373.20L712.40 250.00M590.80 373.20L714.00 250.00M592.40 373.20L715.60 250.00M594.00 373.20L717.20 250.00M595.60 373.20L718.80 250.00M597.20 373.20L720.40 250.00M598.80 373.20L722.00 250.00M600.40 373.20L723.60 250.00M602.00 373.20L725.20 250.00M603.60 373.20L726.80 250.00M605.20 373.20L728.40 250.00M606.80 373.20L730.00 250.00M608.40 373.20L731.60 250.00M610.00 373.20L733.20 250.00M611.60 373.20L734.80 250.00M613.20 373.20L736.40 250.00M614.80 373.20L738.00 250.00M616.40 373.20L739.60 250.00M618.00 373.20L741.20 250.00M619.60 373.20L742.80 250.00M621.20 373.20L744.40 250.00M622.80 373.20L746.00 250.00M624.40 373.20L747.60 250.00M626.00 373.20L749.20 250.00M627.60 373.20L750.80 250.00M629.20 373.20L752.40 250.00M630.80 373.20L754.00 250.00M632.40 373.20L755.60 250.00M634.00 373.20L757.20 250.00M635.60 373.20L758.80 250.00M637.20 373.20L760.40 250.00M638.80 373.20L762.00 250.00M640.40 373.20L763.60 250.00M642.00 373.20L765.20 250.00M643.60 373.20L766.80 250.00M645.20 373.20L768.40 250.00M646.80 373.20L770.00 250.00M648.40 373.20L771.60 250.00M650.00 373.20L773.20 250.00M651.60 373.20L774.80 250.00M653.20 373.20L776.40 250.00M654.80 373.20L778.00 250.00M656.40 373.20L779.60 250.00M658.00 373.20L781.20 250.00M659.60 373.20L782.80 250.00M661.20 373.20L784.40 250.00M662.80 373.20L786.00 250.00M664.40 373.20L787.60 250.00M666.00 373.20L789.20 250.00M667.60 373.20L790.80 250.00M669.20 373.20L792.40 250.00M670.80 373.20L794.00 250.00M510.80 250.00L634.00 373.20M512.40 250.00L635.60 373.20M514.00 250.00L637.20 373.20M515.60 250.00L638.80 373.20M517.20 250.00L640.40 373.20M518.80 250.00L642.00 373.20M520.40 250.00L643.60 373.20M522.00 250.00L645.20 373.20M523.60 250.00L646.80 373.20M525.20 250.00L648.40 373.20M526.80 250.00L650.00 373.20M528.40 250.00L651.60 373.20M530.00 250.00L653.20 373.20M531.60 250.00L654.80 373.20M533.20 250.00L656.40 373.20M534.80 250.00L658.00 373.20M536.40 250.00L659.60 373.20M538.00 250.00L661.20 373.20M539.60 250.00L662.80 373.20M541.20 250.00L664.40 373.20M542.80 250.00L666.00 373.20M544.40 250.00L667.60 373.20M546.00 250.00L669.20 373.20M547.60 250.00L670.80 373.20M549.20 250.00L672.40 373.20M550.80 250.00L674.00 373.20M552.40 250.00L675.60 373.20M554.00 250.00L677.20 373.20M555.60 250.00L678.80 373.20M557.20 250.00L680.40 373.20M558.80 250.00L682.00 373.20M560.40 250.00L683.60 373.20M562.00 250.00L685.20 373.20M563.60 250.00L686.80 373.20M565.20 250.00L688.40 373.20M566.80 250.00L690.00 373.20M568.40 250.00L691.60 373.20M570.00 250.00L693.20 373.20M571.60 250.00L694.80 373.20M573.20 250.00L696.40 373.20M574.80 250.00L698.00 373.20M576.40 250.00L699.60 373.20M578.00 250.00L701.20 373.20M579.60 250.00L702.80 373.20M581.20 250.00L704.40 373.20M582.80 250.00L706.00 373.20M584.40 250.00L707.60 373.20M586.00 250.00L709.20 373.20M587.60 250.00L710.80 373.20M589.20 250.00L712.40 373.20M590.80 250.00L714.00 373.20M592.40 250.00L715.60 373.20M594.00 250.00L717.20 373.20M595.60 250.00L718.80 373.20M597.20 250.00L720.40 373.20M598.80 250.00L722.00 373.20M600.40 250.00L723.60 373.20M602.00 250.00L725.20 373.20M603.60 250.00L726.80 373.20M605.20 250.00L728.40 373.20M606.80 250.00L730.00 373.20M608.40 250.00L731.60 373.20M610.00 250.00L733.20 373.20M611.60 250.00L734.80 373.20M613.20 250.00L736.40 373.20M614.80 250.00L738.00 373.20M616.40 250.00L739.60 373.20M618.00 250.00L741.20 373.20M619.60 250.00L742.80 373.20M621.20 250.00L744.40 373.20M622.80 250.00L746.00 373.20M624.40 250.00L747.60 373.20M626.00 250.00L749.20 373.20M627.60 250.00L750.80 373.20M629.20 250.00L752.40 373.20M630.80 250.00L754.00 373.20M632.40 250.00L755.60 373.20M634.00 250.00L757.20 373.20M635.60 250.00L758.80 373.20M637.20 250.00L760.40 373.20M638.80 250.00L762.00 373.20M640.40 250.00L763.60 373.20M642.00 250.00L765.20 373.20M643.60 250.00L766.80 373.20M645.20 250.00L768.40 373.20M646.80 250.00L770.00 373.20M648.40 250.00L771.60 373.20M650.00 250.00L773.20 373.20M651.60 250.00L774.80 373.20M653.20 250.00L776.40 373.20M654.80 250.00L778.00 373.20M656.40 250.00L779.60 373.20M658.00 250.00L781.20 373.20M659.60 250.00L782.80 373.20M661.20 250.00L784.40 373.20M662.80 250.00L786.00 373.20M664.40 250.00L787.60 373.20M666.00 250.00L789.20 373.20M667.60 250.00L790.80 373.20M669.20 250.00L792.40 373.20M670.80 250.00L794.00 373.20" stroke="#000" stroke-width="0.62" fill="none"/>
<path d="M668.3 250 V370 H634 V373.2 H667.5 Q671.4 373.2 671.4 369 V250 Z" fill="none" stroke="#000" stroke-width="0.6" />
<rect x="686.4" y="302.3" width="67.30" height="6.70" fill="#fff" stroke="#000" stroke-width="0" />
<clipPath id="c8"><path d="M686.4 302.3H753.7V309H686.4Z"/></clipPath><path clip-path="url(#c8)" d="M679.70 309.00L686.40 302.30M682.00 309.00L688.70 302.30M684.30 309.00L691.00 302.30M686.60 309.00L693.30 302.30M688.90 309.00L695.60 302.30M691.20 309.00L697.90 302.30M693.50 309.00L700.20 302.30M695.80 309.00L702.50 302.30M698.10 309.00L704.80 302.30M700.40 309.00L707.10 302.30M702.70 309.00L709.40 302.30M705.00 309.00L711.70 302.30M707.30 309.00L714.00 302.30M709.60 309.00L716.30 302.30M711.90 309.00L718.60 302.30M714.20 309.00L720.90 302.30M716.50 309.00L723.20 302.30M718.80 309.00L725.50 302.30M721.10 309.00L727.80 302.30M723.40 309.00L730.10 302.30M725.70 309.00L732.40 302.30M728.00 309.00L734.70 302.30M730.30 309.00L737.00 302.30M732.60 309.00L739.30 302.30M734.90 309.00L741.60 302.30M737.20 309.00L743.90 302.30M739.50 309.00L746.20 302.30M741.80 309.00L748.50 302.30M744.10 309.00L750.80 302.30M746.40 309.00L753.10 302.30M748.70 309.00L755.40 302.30M751.00 309.00L757.70 302.30M753.30 309.00L760.00 302.30M679.70 302.30L686.40 309.00M682.00 302.30L688.70 309.00M684.30 302.30L691.00 309.00M686.60 302.30L693.30 309.00M688.90 302.30L695.60 309.00M691.20 302.30L697.90 309.00M693.50 302.30L700.20 309.00M695.80 302.30L702.50 309.00M698.10 302.30L704.80 309.00M700.40 302.30L707.10 309.00M702.70 302.30L709.40 309.00M705.00 302.30L711.70 309.00M707.30 302.30L714.00 309.00M709.60 302.30L716.30 309.00M711.90 302.30L718.60 309.00M714.20 302.30L720.90 309.00M716.50 302.30L723.20 309.00M718.80 302.30L725.50 309.00M721.10 302.30L727.80 309.00M723.40 302.30L730.10 309.00M725.70 302.30L732.40 309.00M728.00 302.30L734.70 309.00M730.30 302.30L737.00 309.00M732.60 302.30L739.30 309.00M734.90 302.30L741.60 309.00M737.20 302.30L743.90 309.00M739.50 302.30L746.20 309.00M741.80 302.30L748.50 309.00M744.10 302.30L750.80 309.00M746.40 302.30L753.10 309.00M748.70 302.30L755.40 309.00M751.00 302.30L757.70 309.00M753.30 302.30L760.00 309.00" stroke="#000" stroke-width="0.5" fill="none"/>
<rect x="686.4" y="302.3" width="67.30" height="6.70" fill="none" stroke="#000" stroke-width="0.7" />
<rect x="686.4" y="318.2" width="67.30" height="5.00" fill="#fff" stroke="#000" stroke-width="0" />
<clipPath id="c9"><path d="M686.4 318.2H753.7V323.2H686.4Z"/></clipPath><path clip-path="url(#c9)" d="M681.40 323.20L686.40 318.20M683.70 323.20L688.70 318.20M686.00 323.20L691.00 318.20M688.30 323.20L693.30 318.20M690.60 323.20L695.60 318.20M692.90 323.20L697.90 318.20M695.20 323.20L700.20 318.20M697.50 323.20L702.50 318.20M699.80 323.20L704.80 318.20M702.10 323.20L707.10 318.20M704.40 323.20L709.40 318.20M706.70 323.20L711.70 318.20M709.00 323.20L714.00 318.20M711.30 323.20L716.30 318.20M713.60 323.20L718.60 318.20M715.90 323.20L720.90 318.20M718.20 323.20L723.20 318.20M720.50 323.20L725.50 318.20M722.80 323.20L727.80 318.20M725.10 323.20L730.10 318.20M727.40 323.20L732.40 318.20M729.70 323.20L734.70 318.20M732.00 323.20L737.00 318.20M734.30 323.20L739.30 318.20M736.60 323.20L741.60 318.20M738.90 323.20L743.90 318.20M741.20 323.20L746.20 318.20M743.50 323.20L748.50 318.20M745.80 323.20L750.80 318.20M748.10 323.20L753.10 318.20M750.40 323.20L755.40 318.20M752.70 323.20L757.70 318.20M681.40 318.20L686.40 323.20M683.70 318.20L688.70 323.20M686.00 318.20L691.00 323.20M688.30 318.20L693.30 323.20M690.60 318.20L695.60 323.20M692.90 318.20L697.90 323.20M695.20 318.20L700.20 323.20M697.50 318.20L702.50 323.20M699.80 318.20L704.80 323.20M702.10 318.20L707.10 323.20M704.40 318.20L709.40 323.20M706.70 318.20L711.70 323.20M709.00 318.20L714.00 323.20M711.30 318.20L716.30 323.20M713.60 318.20L718.60 323.20M715.90 318.20L720.90 323.20M718.20 318.20L723.20 323.20M720.50 318.20L725.50 323.20M722.80 318.20L727.80 323.20M725.10 318.20L730.10 323.20M727.40 318.20L732.40 323.20M729.70 318.20L734.70 323.20M732.00 318.20L737.00 323.20M734.30 318.20L739.30 323.20M736.60 318.20L741.60 323.20M738.90 318.20L743.90 323.20M741.20 318.20L746.20 323.20M743.50 318.20L748.50 323.20M745.80 318.20L750.80 323.20M748.10 318.20L753.10 323.20M750.40 318.20L755.40 323.20M752.70 318.20L757.70 323.20" stroke="#000" stroke-width="0.5" fill="none"/>
<rect x="686.4" y="318.2" width="67.30" height="5.00" fill="none" stroke="#000" stroke-width="0.7" />
<rect x="709.4" y="306.6" width="64.60" height="13.80" fill="#fff" stroke="#000" stroke-width="0.9" />
<rect x="668.5" y="309.0" width="40.90" height="9.20" fill="#fff" stroke="#000" stroke-width="0" />
<clipPath id="c10"><path d="M668.5 309H709.4V318.2H668.5Z"/></clipPath><path clip-path="url(#c10)" d="M659.30 309.00L668.50 318.20M661.60 309.00L670.80 318.20M663.90 309.00L673.10 318.20M666.20 309.00L675.40 318.20M668.50 309.00L677.70 318.20M670.80 309.00L680.00 318.20M673.10 309.00L682.30 318.20M675.40 309.00L684.60 318.20M677.70 309.00L686.90 318.20M680.00 309.00L689.20 318.20M682.30 309.00L691.50 318.20M684.60 309.00L693.80 318.20M686.90 309.00L696.10 318.20M689.20 309.00L698.40 318.20M691.50 309.00L700.70 318.20M693.80 309.00L703.00 318.20M696.10 309.00L705.30 318.20M698.40 309.00L707.60 318.20M700.70 309.00L709.90 318.20M703.00 309.00L712.20 318.20M705.30 309.00L714.50 318.20M707.60 309.00L716.80 318.20" stroke="#000" stroke-width="0.68" fill="none"/>
<rect x="668.5" y="309.0" width="40.90" height="9.20" fill="none" stroke="#000" stroke-width="0.8" />
<path d="M715.8 306.6 V320.4" fill="none" stroke="#000" stroke-width="1.2" />
<circle cx="716" cy="313" r="7.6" fill="none" stroke="#000" stroke-width="0.45"/>
<path d="M679 294.6 H686.5 V309 H668.5 V305.2 H679 Z" fill="#868686" stroke="#000" stroke-width="1.1" />
<path d="M679 332.3 H686.5 V318.2 H668.5 V321.8 H679 Z" fill="#868686" stroke="#000" stroke-width="1.1" />
<path d="M753.7 295 H758 L760 299 H766 L769 301.5 H773.5 V306.6 H753.7 Z" fill="#7a7a7a" stroke="#000" stroke-width="0.9" />
<path d="M753.7 320.4 H773.5 V324.5 H759.5 V332.8 H753.7 Z" fill="#7a7a7a" stroke="#000" stroke-width="0.9" />
<rect x="773.5" y="306.6" width="11.50" height="13.80" fill="#fff" stroke="#000" stroke-width="1.3" />
<path d="M785 305 H795.5 M785 321.5 H795.5 M794.6 305 V321.5" fill="none" stroke="#000" stroke-width="0.5" />
<text transform="translate(781 313.5) rotate(-90) scale(0.85 1)" font-family="Liberation Sans" font-size="3" font-style="italic" text-anchor="middle" fill="#000" >Ø7</text>
<text transform="translate(791.5 313.5) rotate(-90) scale(0.85 1)" font-family="Liberation Sans" font-size="3" font-style="italic" text-anchor="middle" fill="#000" >Ø10</text>
<path d="M632 313 H800" fill="none" stroke="#000" stroke-width="0.5" stroke-dasharray="8 1.2 1 1.2"/>
<text transform="translate(744 311) scale(0.85 1)" font-family="Liberation Sans" font-size="3" font-style="italic" text-anchor="middle" fill="#000" >29</text>
<path d="M716 310.8 H773" fill="none" stroke="#000" stroke-width="0.4" />
<rect x="720.6" y="269.6" width="38.90" height="12.60" fill="#fff" stroke="#000" stroke-width="0.9" />
<path d="M722 271.5 H758 M722 280.3 H758 M739.8 269.6 V282.2" fill="none" stroke="#000" stroke-width="0.45" />
<rect x="759.5" y="266.5" width="11.70" height="19.70" fill="#fff" stroke="#000" stroke-width="1.0" />
<rect x="771.2" y="264.5" width="2.80" height="23.70" fill="#fff" stroke="#000" stroke-width="0.7" />
<path d="M722 276 H776" fill="none" stroke="#000" stroke-width="0.4" stroke-dasharray="5 1 1 1"/>
<rect x="714" y="345" width="38.00" height="10.50" fill="#fff" stroke="#000" stroke-width="0.9" />
<path d="M716 346.8 H750 M716 353.7 H750 M738 345 V355.5" fill="none" stroke="#000" stroke-width="0.45" />
<rect x="703.2" y="340" width="10.80" height="20.80" fill="#fff" stroke="#000" stroke-width="1.0" />
<path d="M700 350.2 H760" fill="none" stroke="#000" stroke-width="0.4" stroke-dasharray="5 1 1 1"/>
<path d="M774 344.6 H786 M774 356.4 H786 M785.3 330.4 V356.4" fill="none" stroke="#000" stroke-width="0.8" />
<text transform="translate(783.5 338) rotate(-90) scale(0.85 1)" font-family="Liberation Sans" font-size="3.2" font-style="italic" text-anchor="middle" fill="#000" >18</text>
<text transform="translate(788.2 337) rotate(-90) scale(0.85 1)" font-family="Liberation Sans" font-size="2.6" font-style="italic" text-anchor="middle" fill="#000" >+0,018</text>
<rect x="661.0" y="247.5" width="9.60" height="36.70" fill="#fff" stroke="#000" stroke-width="0.9" />
<rect x="651.7" y="254.9" width="9.30" height="21.30" fill="#fff" stroke="#000" stroke-width="0.9" />
<path d="M651.7 259.8 H661 M651.7 271.4 H661" fill="none" stroke="#000" stroke-width="0.5" />
<rect x="643.7" y="260.2" width="8.00" height="11.00" fill="#fff" stroke="#000" stroke-width="0.9" />
<rect x="635.3" y="305.4" width="16.90" height="15.70" fill="#fff" stroke="#000" stroke-width="0.9" />
<path d="M642.5 305.4 V321.1" fill="none" stroke="#000" stroke-width="0.6" />
<path d="M652.5 299.8 H664.5 V327.4 H652.5 Z" fill="#fff" stroke="#000" stroke-width="0.9" />
<path d="M652.5 306.4 H664.5 M652.5 320.6 H664.5" fill="none" stroke="#000" stroke-width="0.5" />
<rect x="664.5" y="298.6" width="4.20" height="30.00" fill="#fff" stroke="#000" stroke-width="0.9" />
<path d="M632 307.5 V319 M630.5 307.5 H635 M630.5 319 H635" fill="none" stroke="#000" stroke-width="0.4" />
<rect x="661.3" y="342.0" width="7.30" height="37.70" fill="#fff" stroke="#000" stroke-width="0.9" />
<rect x="651.7" y="349.0" width="9.60" height="20.90" fill="#fff" stroke="#000" stroke-width="0.9" />
<path d="M651.7 353.9 H661.3 M651.7 365 H661.3" fill="none" stroke="#000" stroke-width="0.5" />
<rect x="643.4" y="355.2" width="8.30" height="11.60" fill="#fff" stroke="#000" stroke-width="0.9" />
<path d="M634 373.2 V468 M644 373 V391 M654.5 373 V391 M644 390.5 H654.5" fill="none" stroke="#000" stroke-width="0.5" />
<text transform="translate(649.3 389.6) scale(0.85 1)" font-family="Liberation Sans" font-size="2.8" font-style="italic" text-anchor="middle" fill="#000" >Ø11</text>
<path d="M634 465.4 H774 M774 366 V468" fill="none" stroke="#000" stroke-width="0.5" />
<path d="M634 465.4 l4 -0.9 v1.8 Z M774 465.4 l-4 -0.9 v1.8 Z" fill="#000"/>
<text transform="translate(704 464.3) scale(0.85 1)" font-family="Liberation Sans" font-size="3" font-style="italic" text-anchor="middle" fill="#000" >54</text>
<path d="M693 234.3 H681.7 L673 268" fill="none" stroke="#000" stroke-width="0.55" />
<text transform="translate(687.6 231.5) scale(0.8 1)" font-family="Liberation Sans" font-size="5.0" font-style="italic" text-anchor="middle" fill="#000" >8</text>
<path d="M707 234.3 H695 L692 262" fill="none" stroke="#000" stroke-width="0.55" />
<text transform="translate(702 231.5) scale(0.8 1)" font-family="Liberation Sans" font-size="5.0" font-style="italic" text-anchor="middle" fill="#000" >9</text>
<path d="M724 234.3 H711.7 L704 252" fill="none" stroke="#000" stroke-width="0.55" />
<text transform="translate(718.4 231.5) scale(0.8 1)" font-family="Liberation Sans" font-size="5.0" font-style="italic" text-anchor="middle" fill="#000" >10</text>
<path d="M740 234.3 H727.6 L712 265" fill="none" stroke="#000" stroke-width="0.55" />
<text transform="translate(734.4 231.5) scale(0.8 1)" font-family="Liberation Sans" font-size="5.0" font-style="italic" text-anchor="middle" fill="#000" >6</text>
<path d="M755 234.3 H743.6 L731 268" fill="none" stroke="#000" stroke-width="0.55" />
<text transform="translate(749.7 231.5) scale(0.8 1)" font-family="Liberation Sans" font-size="5.0" font-style="italic" text-anchor="middle" fill="#000" >2</text>
<path d="M773 234.3 H761 L735 300" fill="none" stroke="#000" stroke-width="0.55" />
<text transform="translate(767.2 231.5) scale(0.8 1)" font-family="Liberation Sans" font-size="5.0" font-style="italic" text-anchor="middle" fill="#000" >3</text>
<path d="M800 242.2 H787.7 L765 263" fill="none" stroke="#000" stroke-width="0.55" />
<text transform="translate(794.5 238.5) scale(0.8 1)" font-family="Liberation Sans" font-size="5.0" font-style="italic" text-anchor="middle" fill="#000" >4</text>
<path d="M800 277.6 H787.7 L773 294" fill="none" stroke="#000" stroke-width="0.55" />
<text transform="translate(794.5 274.3) scale(0.8 1)" font-family="Liberation Sans" font-size="5.0" font-style="italic" text-anchor="middle" fill="#000" >5</text>
<path d="M800 390 H787.7 L739 352" fill="none" stroke="#000" stroke-width="0.55" />
<text transform="translate(794.5 387) scale(0.8 1)" font-family="Liberation Sans" font-size="5.0" font-style="italic" text-anchor="middle" fill="#000" >13</text>
<path d="M620.4 270.7 H632 L670.7 295.5" fill="none" stroke="#000" stroke-width="0.55" />
<text transform="translate(626 267.3) scale(0.8 1)" font-family="Liberation Sans" font-size="5.0" font-style="italic" text-anchor="middle" fill="#000" >7</text>
<path d="M620.4 281.4 H632 L664.6 298.6" fill="none" stroke="#000" stroke-width="0.55" />
<text transform="translate(626 278) scale(0.8 1)" font-family="Liberation Sans" font-size="5.0" font-style="italic" text-anchor="middle" fill="#000" >18</text>
<path d="M620.4 292.4 H632 L660.3 304" fill="none" stroke="#000" stroke-width="0.55" />
<text transform="translate(626 289) scale(0.8 1)" font-family="Liberation Sans" font-size="5.0" font-style="italic" text-anchor="middle" fill="#000" >16</text>
<path d="M621 343 H632.5 L655 329" fill="none" stroke="#000" stroke-width="0.55" />
<text transform="translate(627 339.5) scale(0.8 1)" font-family="Liberation Sans" font-size="5.0" font-style="italic" text-anchor="middle" fill="#000" >1</text>
<path d="M621 354.5 H632.5 L640 370.5" fill="none" stroke="#000" stroke-width="0.55" />
<text transform="translate(627 351) scale(0.8 1)" font-family="Liberation Sans" font-size="5.0" font-style="italic" text-anchor="middle" fill="#000" >12</text>
<path d="M674 402 H681.5 L686 381" fill="none" stroke="#000" stroke-width="0.55" />
<text transform="translate(677.5 400) scale(0.8 1)" font-family="Liberation Sans" font-size="5.0" font-style="italic" text-anchor="middle" fill="#000" >8</text>
<text transform="translate(894.3 241.2) scale(0.95 1)" font-family="Liberation Sans" font-size="7" font-style="italic" text-anchor="middle" fill="#000" >А–А</text>
<text transform="translate(894.6 249.4) scale(1.0 1)" font-family="Liberation Sans" font-size="7" font-style="italic" text-anchor="middle" fill="#000" >(Изометрия)</text>
<ellipse cx="863.5" cy="270.5" rx="4.6" ry="7.2" transform="rotate(-30 863.5 270.5)" fill="#4e4c4a" stroke="#222" stroke-width="0.55"/>
<ellipse cx="878" cy="265" rx="11.5" ry="7.6" transform="rotate(-30 878 265)" fill="#a4a2a0" stroke="#2a2a2a" stroke-width="0.55"/>
<path d="M884.8 303.4 L931.4 279.6 Q933 281 932 284 L931.8 427 Q931.5 434 926 437.5 L884.6 461.5 Z" fill="#6d6a67" stroke="#252525" stroke-width="0.6" stroke-linejoin="round" />
<polygon points="847.60,283.10 892.60,258.00 904.05,264.37 858.57,289.09" fill="#7a7672" stroke="#303030" stroke-width="0.4" stroke-linejoin="round" />
<polygon points="858.57,289.09 904.05,264.37 909.09,267.18 863.41,291.73" fill="#a8794e" stroke="#303030" stroke-width="0.4" stroke-linejoin="round" />
<polygon points="863.41,291.73 909.09,267.18 915.10,270.53 869.18,294.87" fill="#1c1c1c" stroke="#303030" stroke-width="0.4" stroke-linejoin="round" />
<polygon points="869.18,294.87 915.10,270.53 931.40,279.60 884.80,303.40" fill="#76726e" stroke="#303030" stroke-width="0.4" stroke-linejoin="round" />
<polygon points="847.60,283.10 892.60,258.00 931.40,279.60 884.80,303.40" fill="none" stroke="#222" stroke-width="0.6" stroke-linejoin="round" />
<polygon points="847.60,283.10 858.60,289.20 858.60,398.50 847.60,392.50" fill="#6e6c69" stroke="none" stroke-width="0" stroke-linejoin="round" /><clipPath id="c11"><path d="M847.60 283.10L858.60 289.20L858.60 398.50L847.60 392.50Z"/></clipPath><path clip-path="url(#c11)" d="M731.00 283.00L847.00 399.00M734.00 283.00L850.00 399.00M737.00 283.00L853.00 399.00M740.00 283.00L856.00 399.00M743.00 283.00L859.00 399.00M746.00 283.00L862.00 399.00M749.00 283.00L865.00 399.00M752.00 283.00L868.00 399.00M755.00 283.00L871.00 399.00M758.00 283.00L874.00 399.00M761.00 283.00L877.00 399.00M764.00 283.00L880.00 399.00M767.00 283.00L883.00 399.00M770.00 283.00L886.00 399.00M773.00 283.00L889.00 399.00M776.00 283.00L892.00 399.00M779.00 283.00L895.00 399.00M782.00 283.00L898.00 399.00M785.00 283.00L901.00 399.00M788.00 283.00L904.00 399.00M791.00 283.00L907.00 399.00M794.00 283.00L910.00 399.00M797.00 283.00L913.00 399.00M800.00 283.00L916.00 399.00M803.00 283.00L919.00 399.00M806.00 283.00L922.00 399.00M809.00 283.00L925.00 399.00M812.00 283.00L928.00 399.00M815.00 283.00L931.00 399.00M818.00 283.00L934.00 399.00M821.00 283.00L937.00 399.00M824.00 283.00L940.00 399.00M827.00 283.00L943.00 399.00M830.00 283.00L946.00 399.00M833.00 283.00L949.00 399.00M836.00 283.00L952.00 399.00M839.00 283.00L955.00 399.00M842.00 283.00L958.00 399.00M845.00 283.00L961.00 399.00M848.00 283.00L964.00 399.00M851.00 283.00L967.00 399.00M854.00 283.00L970.00 399.00M857.00 283.00L973.00 399.00" stroke="#262626" stroke-width="0.55" fill="none"/><polygon points="847.60,283.10 858.60,289.20 858.60,398.50 847.60,392.50" fill="none" stroke="#252525" stroke-width="0.5" stroke-linejoin="round" />
<polygon points="858.60,289.20 863.50,292.00 863.50,401.00 858.60,398.50" fill="#3b2c20" stroke="#222" stroke-width="0.4" stroke-linejoin="round" />
<clipPath id="c12"><path d="M858.6 289.2L863.5 292L863.5 401L858.6 398.5Z"/></clipPath><path clip-path="url(#c12)" d="M746.00 401.00L858.00 289.00M747.80 401.00L859.80 289.00M749.60 401.00L861.60 289.00M751.40 401.00L863.40 289.00M753.20 401.00L865.20 289.00M755.00 401.00L867.00 289.00M756.80 401.00L868.80 289.00M758.60 401.00L870.60 289.00M760.40 401.00L872.40 289.00M762.20 401.00L874.20 289.00M764.00 401.00L876.00 289.00M765.80 401.00L877.80 289.00M767.60 401.00L879.60 289.00M769.40 401.00L881.40 289.00M771.20 401.00L883.20 289.00M773.00 401.00L885.00 289.00M774.80 401.00L886.80 289.00M776.60 401.00L888.60 289.00M778.40 401.00L890.40 289.00M780.20 401.00L892.20 289.00M782.00 401.00L894.00 289.00M783.80 401.00L895.80 289.00M785.60 401.00L897.60 289.00M787.40 401.00L899.40 289.00M789.20 401.00L901.20 289.00M791.00 401.00L903.00 289.00M792.80 401.00L904.80 289.00M794.60 401.00L906.60 289.00M796.40 401.00L908.40 289.00M798.20 401.00L910.20 289.00M800.00 401.00L912.00 289.00M801.80 401.00L913.80 289.00M803.60 401.00L915.60 289.00M805.40 401.00L917.40 289.00M807.20 401.00L919.20 289.00M809.00 401.00L921.00 289.00M810.80 401.00L922.80 289.00M812.60 401.00L924.60 289.00M814.40 401.00L926.40 289.00M816.20 401.00L928.20 289.00M818.00 401.00L930.00 289.00M819.80 401.00L931.80 289.00M821.60 401.00L933.60 289.00M823.40 401.00L935.40 289.00M825.20 401.00L937.20 289.00M827.00 401.00L939.00 289.00M828.80 401.00L940.80 289.00M830.60 401.00L942.60 289.00M832.40 401.00L944.40 289.00M834.20 401.00L946.20 289.00M836.00 401.00L948.00 289.00M837.80 401.00L949.80 289.00M839.60 401.00L951.60 289.00M841.40 401.00L953.40 289.00M843.20 401.00L955.20 289.00M845.00 401.00L957.00 289.00M846.80 401.00L958.80 289.00M848.60 401.00L960.60 289.00M850.40 401.00L962.40 289.00M852.20 401.00L964.20 289.00M854.00 401.00L966.00 289.00M855.80 401.00L967.80 289.00M857.60 401.00L969.60 289.00M859.40 401.00L971.40 289.00M861.20 401.00L973.20 289.00M863.00 401.00L975.00 289.00M746.00 289.00L858.00 401.00M747.80 289.00L859.80 401.00M749.60 289.00L861.60 401.00M751.40 289.00L863.40 401.00M753.20 289.00L865.20 401.00M755.00 289.00L867.00 401.00M756.80 289.00L868.80 401.00M758.60 289.00L870.60 401.00M760.40 289.00L872.40 401.00M762.20 289.00L874.20 401.00M764.00 289.00L876.00 401.00M765.80 289.00L877.80 401.00M767.60 289.00L879.60 401.00M769.40 289.00L881.40 401.00M771.20 289.00L883.20 401.00M773.00 289.00L885.00 401.00M774.80 289.00L886.80 401.00M776.60 289.00L888.60 401.00M778.40 289.00L890.40 401.00M780.20 289.00L892.20 401.00M782.00 289.00L894.00 401.00M783.80 289.00L895.80 401.00M785.60 289.00L897.60 401.00M787.40 289.00L899.40 401.00M789.20 289.00L901.20 401.00M791.00 289.00L903.00 401.00M792.80 289.00L904.80 401.00M794.60 289.00L906.60 401.00M796.40 289.00L908.40 401.00M798.20 289.00L910.20 401.00M800.00 289.00L912.00 401.00M801.80 289.00L913.80 401.00M803.60 289.00L915.60 401.00M805.40 289.00L917.40 401.00M807.20 289.00L919.20 401.00M809.00 289.00L921.00 401.00M810.80 289.00L922.80 401.00M812.60 289.00L924.60 401.00M814.40 289.00L926.40 401.00M816.20 289.00L928.20 401.00M818.00 289.00L930.00 401.00M819.80 289.00L931.80 401.00M821.60 289.00L933.60 401.00M823.40 289.00L935.40 401.00M825.20 289.00L937.20 401.00M827.00 289.00L939.00 401.00M828.80 289.00L940.80 401.00M830.60 289.00L942.60 401.00M832.40 289.00L944.40 401.00M834.20 289.00L946.20 401.00M836.00 289.00L948.00 401.00M837.80 289.00L949.80 401.00M839.60 289.00L951.60 401.00M841.40 289.00L953.40 401.00M843.20 289.00L955.20 401.00M845.00 289.00L957.00 401.00M846.80 289.00L958.80 401.00M848.60 289.00L960.60 401.00M850.40 289.00L962.40 401.00M852.20 289.00L964.20 401.00M854.00 289.00L966.00 401.00M855.80 289.00L967.80 401.00M857.60 289.00L969.60 401.00M859.40 289.00L971.40 401.00M861.20 289.00L973.20 401.00M863.00 289.00L975.00 401.00" stroke="#7a5c42" stroke-width="0.45" fill="none"/>
<polygon points="863.50,292.00 870.00,295.50 870.00,403.00 863.50,401.00" fill="#1d1d1d" stroke="#111" stroke-width="0.4" stroke-linejoin="round" />
<polygon points="870.00,295.50 884.80,303.40 884.60,461.50 869.00,453.90" fill="#72706c" stroke="none" stroke-width="0" stroke-linejoin="round" /><clipPath id="c13"><path d="M870.00 295.50L884.80 303.40L884.60 461.50L869.00 453.90Z"/></clipPath><path clip-path="url(#c13)" d="M701.00 462.00L868.00 295.00M706.40 462.00L873.40 295.00M711.80 462.00L878.80 295.00M717.20 462.00L884.20 295.00M722.60 462.00L889.60 295.00M728.00 462.00L895.00 295.00M733.40 462.00L900.40 295.00M738.80 462.00L905.80 295.00M744.20 462.00L911.20 295.00M749.60 462.00L916.60 295.00M755.00 462.00L922.00 295.00M760.40 462.00L927.40 295.00M765.80 462.00L932.80 295.00M771.20 462.00L938.20 295.00M776.60 462.00L943.60 295.00M782.00 462.00L949.00 295.00M787.40 462.00L954.40 295.00M792.80 462.00L959.80 295.00M798.20 462.00L965.20 295.00M803.60 462.00L970.60 295.00M809.00 462.00L976.00 295.00M814.40 462.00L981.40 295.00M819.80 462.00L986.80 295.00M825.20 462.00L992.20 295.00M830.60 462.00L997.60 295.00M836.00 462.00L1003.00 295.00M841.40 462.00L1008.40 295.00M846.80 462.00L1013.80 295.00M852.20 462.00L1019.20 295.00M857.60 462.00L1024.60 295.00M863.00 462.00L1030.00 295.00M868.40 462.00L1035.40 295.00M873.80 462.00L1040.80 295.00M879.20 462.00L1046.20 295.00M884.60 462.00L1051.60 295.00" stroke="#262626" stroke-width="0.6" fill="none"/><polygon points="870.00,295.50 884.80,303.40 884.60,461.50 869.00,453.90" fill="none" stroke="#252525" stroke-width="0.5" stroke-linejoin="round" />
<polygon points="845.40,323.00 847.60,324.00 847.60,384.00 845.40,383.00" fill="#7a3418" stroke="#3a1a0a" stroke-width="0.3" stroke-linejoin="round" />
<ellipse cx="911" cy="428" rx="6.3" ry="9.3" transform="rotate(18 911 428)" fill="#4a4846" stroke="#222" stroke-width="0.6"/>
<ellipse cx="912.3" cy="426.5" rx="4.6" ry="7.5" transform="rotate(18 912.3 426.5)" fill="#a09e9b"/>
<ellipse cx="918.5" cy="299.5" rx="7.4" ry="10.4" transform="rotate(20 918.5 299.5)" fill="#6a6764" stroke="#2a2a2a" stroke-width="0.5"/>
<ellipse cx="918.5" cy="299.5" rx="5.5" ry="8" transform="rotate(20 918.5 299.5)" fill="#75726f" stroke="#2a2a2a" stroke-width="0.45"/>
<ellipse cx="918.8" cy="300" rx="2.5" ry="3.6" transform="rotate(20 918.8 300)" fill="#5e5c5a" stroke="#2a2a2a" stroke-width="0.4"/>
<path d="M882.8 316.1 Q896 308.5 910.4 312.4 L931.6 324.8 L941 332 Q932 322.5 918 322.8 Q909 324 905.8 329.4 Z" fill="#7b7874" stroke="#252525" stroke-width="0.5" stroke-linejoin="round" />
<path d="M905.8 329.4 Q910 323.5 920 322.8 Q933 323 941 332 L920.8 337.2 Z" fill="#817e7a" stroke="#252525" stroke-width="0.5" stroke-linejoin="round" />
<path d="M920.8 337.2 L941 332 Q951 337 955 346 Q959 357 957.5 368 Q955 386 943 400 Q933 411 922.9 420.7 Z" fill="#6f6c69" stroke="#252525" stroke-width="0.6" stroke-linejoin="round" />
<polygon points="882.80,316.10 920.80,337.20 922.90,420.70 883.40,398.80" fill="#6c6a66" stroke="none" stroke-width="0" stroke-linejoin="round" /><clipPath id="c14"><path d="M882.80 316.10L920.80 337.20L922.90 420.70L883.40 398.80Z"/></clipPath><path clip-path="url(#c14)" d="M778.00 316.00L883.00 421.00M782.00 316.00L887.00 421.00M786.00 316.00L891.00 421.00M790.00 316.00L895.00 421.00M794.00 316.00L899.00 421.00M798.00 316.00L903.00 421.00M802.00 316.00L907.00 421.00M806.00 316.00L911.00 421.00M810.00 316.00L915.00 421.00M814.00 316.00L919.00 421.00M818.00 316.00L923.00 421.00M822.00 316.00L927.00 421.00M826.00 316.00L931.00 421.00M830.00 316.00L935.00 421.00M834.00 316.00L939.00 421.00M838.00 316.00L943.00 421.00M842.00 316.00L947.00 421.00M846.00 316.00L951.00 421.00M850.00 316.00L955.00 421.00M854.00 316.00L959.00 421.00M858.00 316.00L963.00 421.00M862.00 316.00L967.00 421.00M866.00 316.00L971.00 421.00M870.00 316.00L975.00 421.00M874.00 316.00L979.00 421.00M878.00 316.00L983.00 421.00M882.00 316.00L987.00 421.00M886.00 316.00L991.00 421.00M890.00 316.00L995.00 421.00M894.00 316.00L999.00 421.00M898.00 316.00L1003.00 421.00M902.00 316.00L1007.00 421.00M906.00 316.00L1011.00 421.00M910.00 316.00L1015.00 421.00M914.00 316.00L1019.00 421.00M918.00 316.00L1023.00 421.00M922.00 316.00L1027.00 421.00" stroke="#262626" stroke-width="0.55" fill="none"/><polygon points="882.80,316.10 920.80,337.20 922.90,420.70 883.40,398.80" fill="none" stroke="#252525" stroke-width="0.5" stroke-linejoin="round" />
<path d="M906 329 L906 409" fill="none" stroke="#2a2a2a" stroke-width="0.5" stroke-linejoin="round" />
<ellipse cx="942.9" cy="379.8" rx="6.2" ry="8.6" transform="rotate(20 942.9 379.8)" fill="#6a6764" stroke="#2a2a2a" stroke-width="0.5"/>
<ellipse cx="943.2" cy="380.2" rx="3.2" ry="4.4" transform="rotate(20 943.2 380.2)" fill="#5c5a58" stroke="#2a2a2a" stroke-width="0.4"/>
<polygon points="884.00,329.00 906.00,341.00 906.00,356.00 884.00,344.00" fill="#565452" stroke="#222" stroke-width="0.5" stroke-linejoin="round" />
<polygon points="888.00,333.50 906.00,343.00 904.50,353.50 886.50,344.00" fill="#6c6a68" stroke="#2a2a2a" stroke-width="0.45" stroke-linejoin="round" />
<clipPath id="c15"><path d="M888 333.5L906 343L904.5 353.5L886.5 344Z"/></clipPath><path clip-path="url(#c15)" d="M865.00 354.00L886.00 333.00M866.20 354.00L887.20 333.00M867.40 354.00L888.40 333.00M868.60 354.00L889.60 333.00M869.80 354.00L890.80 333.00M871.00 354.00L892.00 333.00M872.20 354.00L893.20 333.00M873.40 354.00L894.40 333.00M874.60 354.00L895.60 333.00M875.80 354.00L896.80 333.00M877.00 354.00L898.00 333.00M878.20 354.00L899.20 333.00M879.40 354.00L900.40 333.00M880.60 354.00L901.60 333.00M881.80 354.00L902.80 333.00M883.00 354.00L904.00 333.00M884.20 354.00L905.20 333.00M885.40 354.00L906.40 333.00M886.60 354.00L907.60 333.00M887.80 354.00L908.80 333.00M889.00 354.00L910.00 333.00M890.20 354.00L911.20 333.00M891.40 354.00L912.40 333.00M892.60 354.00L913.60 333.00M893.80 354.00L914.80 333.00M895.00 354.00L916.00 333.00M896.20 354.00L917.20 333.00M897.40 354.00L918.40 333.00M898.60 354.00L919.60 333.00M899.80 354.00L920.80 333.00M901.00 354.00L922.00 333.00M902.20 354.00L923.20 333.00M903.40 354.00L924.40 333.00M904.60 354.00L925.60 333.00M905.80 354.00L926.80 333.00" stroke="#3a3a3a" stroke-width="0.4" fill="none"/>
<polygon points="903.00,338.50 915.00,338.00 921.00,350.00 909.00,356.00" fill="#8f8d8a" stroke="#2a2a2a" stroke-width="0.45" stroke-linejoin="round" />
<ellipse cx="917.7" cy="346.9" rx="5.6" ry="7.6" transform="rotate(18 917.7 346.9)" fill="#9a9895" stroke="#2a2a2a" stroke-width="0.5"/>
<ellipse cx="918.2" cy="347.3" rx="2.5" ry="3.4" transform="rotate(18 918.2 347.3)" fill="#7a7876" stroke="#2a2a2a" stroke-width="0.45"/>
<polygon points="848.50,333.50 910.00,367.00 910.00,379.00 848.50,345.00" fill="#2e2e2e" stroke="#1a1a1a" stroke-width="0.4" stroke-linejoin="round" />
<polygon points="848.70,336.10 879.40,352.10 876.90,358.80 848.70,342.30" fill="#b6552c" stroke="#3a1a0a" stroke-width="0.5" stroke-linejoin="round" />
<clipPath id="c16"><path d="M848.7 336.1L879.4 352.1L876.9 358.8L848.7 342.3Z"/></clipPath><path clip-path="url(#c16)" d="M825.00 336.00L848.00 359.00M827.40 336.00L850.40 359.00M829.80 336.00L852.80 359.00M832.20 336.00L855.20 359.00M834.60 336.00L857.60 359.00M837.00 336.00L860.00 359.00M839.40 336.00L862.40 359.00M841.80 336.00L864.80 359.00M844.20 336.00L867.20 359.00M846.60 336.00L869.60 359.00M849.00 336.00L872.00 359.00M851.40 336.00L874.40 359.00M853.80 336.00L876.80 359.00M856.20 336.00L879.20 359.00M858.60 336.00L881.60 359.00M861.00 336.00L884.00 359.00M863.40 336.00L886.40 359.00M865.80 336.00L888.80 359.00M868.20 336.00L891.20 359.00M870.60 336.00L893.60 359.00M873.00 336.00L896.00 359.00M875.40 336.00L898.40 359.00M877.80 336.00L900.80 359.00" stroke="#6a2a10" stroke-width="0.35" fill="none"/>
<ellipse cx="879" cy="356" rx="3" ry="4.4" transform="rotate(-30 879 356)" fill="#c8602f" stroke="#3a1a0a" stroke-width="0.5"/>
<polygon points="880.60,353.50 908.80,368.30 906.60,376.00 879.50,361.50" fill="url(#cer)" stroke="#2a2a2a" stroke-width="0.5" stroke-linejoin="round" />
<path d="M906 357 L915 360 Q922 364 924 370 Q926 378 920 384 L915 386 L906 384 L906 376 L910 376 L910 366 L906 364 Z" fill="#b5532b" stroke="#3a1a0a" stroke-width="0.5" stroke-linejoin="round" />
<ellipse cx="918" cy="374" rx="4.6" ry="7.4" transform="rotate(20 918 374)" fill="#d0642f" stroke="#3a1a0a" stroke-width="0.5"/>
<ellipse cx="918.6" cy="374.5" rx="2.5" ry="4.2" transform="rotate(20 918.6 374.5)" fill="#5a2810"/>
<polygon points="872.00,380.00 900.00,394.00 899.00,404.00 870.00,390.00" fill="#8a8886" stroke="#333" stroke-width="0.4" stroke-linejoin="round" />
<clipPath id="c17"><path d="M878 383L900 394L899 404L876 392Z"/></clipPath><path clip-path="url(#c17)" d="M853.00 405.00L875.00 383.00M854.30 405.00L876.30 383.00M855.60 405.00L877.60 383.00M856.90 405.00L878.90 383.00M858.20 405.00L880.20 383.00M859.50 405.00L881.50 383.00M860.80 405.00L882.80 383.00M862.10 405.00L884.10 383.00M863.40 405.00L885.40 383.00M864.70 405.00L886.70 383.00M866.00 405.00L888.00 383.00M867.30 405.00L889.30 383.00M868.60 405.00L890.60 383.00M869.90 405.00L891.90 383.00M871.20 405.00L893.20 383.00M872.50 405.00L894.50 383.00M873.80 405.00L895.80 383.00M875.10 405.00L897.10 383.00M876.40 405.00L898.40 383.00M877.70 405.00L899.70 383.00M879.00 405.00L901.00 383.00M880.30 405.00L902.30 383.00M881.60 405.00L903.60 383.00M882.90 405.00L904.90 383.00M884.20 405.00L906.20 383.00M885.50 405.00L907.50 383.00M886.80 405.00L908.80 383.00M888.10 405.00L910.10 383.00M889.40 405.00L911.40 383.00M890.70 405.00L912.70 383.00M892.00 405.00L914.00 383.00M893.30 405.00L915.30 383.00M894.60 405.00L916.60 383.00M895.90 405.00L917.90 383.00M897.20 405.00L919.20 383.00M898.50 405.00L920.50 383.00M899.80 405.00L921.80 383.00" stroke="#555" stroke-width="0.35" fill="none"/>
<ellipse cx="872" cy="386" rx="6" ry="9" transform="rotate(-30 872 386)" fill="#a4a29f" stroke="#2a2a2a" stroke-width="0.5"/>
<ellipse cx="899.5" cy="399" rx="2.5" ry="5" transform="rotate(-30 899.5 399)" fill="#9a9896" stroke="#2a2a2a" stroke-width="0.4"/>
<polygon points="826.50,321.00 833.00,316.50 842.00,318.00 842.00,346.00 836.00,350.00 826.50,344.00" fill="#5c5a58" stroke="#222" stroke-width="0.5" stroke-linejoin="round" />
<polygon points="829.00,324.50 835.00,320.00 841.00,321.50 839.00,337.00 830.00,336.00" fill="#8e8c8a" stroke="#2a2a2a" stroke-width="0.4" stroke-linejoin="round" />
<ellipse cx="839.5" cy="335" rx="6.8" ry="14.5" transform="rotate(-5 839.5 335)" fill="#8c8a88" stroke="#222" stroke-width="0.55"/>
<ellipse cx="842" cy="336" rx="4.6" ry="10.5" transform="rotate(-5 842 336)" fill="#7c7a78" stroke="#2a2a2a" stroke-width="0.45"/>
<ellipse cx="843.5" cy="337" rx="3" ry="5.8" fill="#3c3a38"/>
<ellipse cx="844.8" cy="338" rx="2" ry="3.4" fill="#b2b0ad"/>
<polygon points="821.40,368.40 837.40,359.50 845.90,363.50 845.90,383.40 836.50,378.80 836.50,375.80 835.20,372.70 831.50,371.50 829.70,371.80 828.50,374.20 821.40,371.20" fill="#a44a2a" stroke="#3a160a" stroke-width="0.55" stroke-linejoin="round" />
<polygon points="821.40,368.40 821.40,371.20 828.50,374.20 829.70,371.80 828.30,371.60" fill="#6e2e18" stroke="none" stroke-width="0" stroke-linejoin="round" />
<polygon points="836.50,375.80 836.50,378.80 845.90,383.40 845.90,381.00" fill="#6e2e18" stroke="none" stroke-width="0" stroke-linejoin="round" />
<text transform="translate(429.8 527.2) scale(0.78 1)" font-family="Liberation Sans" font-size="5.2" font-style="italic" text-anchor="start" fill="#000" >В (4 : 1)</text>
<text transform="translate(429.8 533.6) scale(0.78 1)" font-family="Liberation Sans" font-size="5.2" font-style="italic" text-anchor="start" fill="#000" >Вар. 1</text>
<clipPath id="blob1"><path d="M425.5 545.7 L428 541 L432 542 L436 539.5 L440 541.5 L444 539.5 L447 542.5 L452 541.5 L455 545 L458 546 L459 551 L463 554 L464 559 L466 563 L465 570 L462 574 L463 580 L459 584 L457 589 L452 590 L447 592 L441 590 L436 592.5 L430 590 L426 591 L424 588 L419 588 L416 584 L413 578 L414 572 L411 566 L413 560 L412 555 L416 551 L418 546 Z"/></clipPath>
<g clip-path="url(#blob1)"><clipPath id="c18"><path d="M405 540H470V552H405Z"/></clipPath><path clip-path="url(#c18)" d="M391.00 552.00L405.00 538.00M395.60 552.00L409.60 538.00M400.20 552.00L414.20 538.00M404.80 552.00L418.80 538.00M409.40 552.00L423.40 538.00M414.00 552.00L428.00 538.00M418.60 552.00L432.60 538.00M423.20 552.00L437.20 538.00M427.80 552.00L441.80 538.00M432.40 552.00L446.40 538.00M437.00 552.00L451.00 538.00M441.60 552.00L455.60 538.00M446.20 552.00L460.20 538.00M450.80 552.00L464.80 538.00M455.40 552.00L469.40 538.00M460.00 552.00L474.00 538.00M464.60 552.00L478.60 538.00M469.20 552.00L483.20 538.00M391.00 538.00L405.00 552.00M395.60 538.00L409.60 552.00M400.20 538.00L414.20 552.00M404.80 538.00L418.80 552.00M409.40 538.00L423.40 552.00M414.00 538.00L428.00 552.00M418.60 538.00L432.60 552.00M423.20 538.00L437.20 552.00M427.80 538.00L441.80 552.00M432.40 538.00L446.40 552.00M437.00 538.00L451.00 552.00M441.60 538.00L455.60 552.00M446.20 538.00L460.20 552.00M450.80 538.00L464.80 552.00M455.40 538.00L469.40 552.00M460.00 538.00L474.00 552.00M464.60 538.00L478.60 552.00M469.20 538.00L483.20 552.00" stroke="#000" stroke-width="0.68" fill="none"/><clipPath id="c19"><path d="M405 582.3H470V595H405Z"/></clipPath><path clip-path="url(#c19)" d="M392.30 595.00L405.00 582.30M396.90 595.00L409.60 582.30M401.50 595.00L414.20 582.30M406.10 595.00L418.80 582.30M410.70 595.00L423.40 582.30M415.30 595.00L428.00 582.30M419.90 595.00L432.60 582.30M424.50 595.00L437.20 582.30M429.10 595.00L441.80 582.30M433.70 595.00L446.40 582.30M438.30 595.00L451.00 582.30M442.90 595.00L455.60 582.30M447.50 595.00L460.20 582.30M452.10 595.00L464.80 582.30M456.70 595.00L469.40 582.30M461.30 595.00L474.00 582.30M465.90 595.00L478.60 582.30M392.30 582.30L405.00 595.00M396.90 582.30L409.60 595.00M401.50 582.30L414.20 595.00M406.10 582.30L418.80 595.00M410.70 582.30L423.40 595.00M415.30 582.30L428.00 595.00M419.90 582.30L432.60 595.00M424.50 582.30L437.20 595.00M429.10 582.30L441.80 595.00M433.70 582.30L446.40 595.00M438.30 582.30L451.00 595.00M442.90 582.30L455.60 595.00M447.50 582.30L460.20 595.00M452.10 582.30L464.80 595.00M456.70 582.30L469.40 595.00M461.30 582.30L474.00 595.00M465.90 582.30L478.60 595.00" stroke="#000" stroke-width="0.68" fill="none"/><clipPath id="c20"><path d="M405 552H436L432 558V578L436 582.3H405Z"/></clipPath><path clip-path="url(#c20)" d="M374.00 552.00L405.00 583.00M378.00 552.00L409.00 583.00M382.00 552.00L413.00 583.00M386.00 552.00L417.00 583.00M390.00 552.00L421.00 583.00M394.00 552.00L425.00 583.00M398.00 552.00L429.00 583.00M402.00 552.00L433.00 583.00M406.00 552.00L437.00 583.00M410.00 552.00L441.00 583.00M414.00 552.00L445.00 583.00M418.00 552.00L449.00 583.00M422.00 552.00L453.00 583.00M426.00 552.00L457.00 583.00M430.00 552.00L461.00 583.00M434.00 552.00L465.00 583.00M438.00 552.00L469.00 583.00" stroke="#000" stroke-width="0.72" fill="none"/><path d="M405 552 H470 M405 582.3 H470" fill="none" stroke="#000" stroke-width="1.0" /><rect x="436" y="555" width="20.50" height="25.00" fill="#fff" stroke="#000" stroke-width="0.9"/><path d="M436 555 L432 559 V576 L436 580" fill="none" stroke="#000" stroke-width="0.8" /><path d="M447.6 555 V580" fill="none" stroke="#000" stroke-width="1.2" /></g>
<path d="M425.5 545.7 L428 541 L432 542 L436 539.5 L440 541.5 L444 539.5 L447 542.5 L452 541.5 L455 545 L458 546 L459 551 L463 554 L464 559 L466 563 L465 570 L462 574 L463 580 L459 584 L457 589 L452 590 L447 592 L441 590 L436 592.5 L430 590 L426 591 L424 588 L419 588 L416 584 L413 578 L414 572 L411 566 L413 560 L412 555 L416 551 L418 546 Z" fill="none" stroke="#000" stroke-width="0.55" />
<path d="M410 567 H467" fill="none" stroke="#000" stroke-width="0.5" stroke-dasharray="6 1 1 1"/>
<path d="M456.5 555 V580 M447.6 556.5 H456.5 M447.6 578.5 H456.5" fill="none" stroke="#000" stroke-width="0.45" />
<text transform="translate(453 567.5) rotate(-90) scale(0.85 1)" font-family="Liberation Sans" font-size="3" font-style="italic" text-anchor="middle" fill="#000" >Ø4</text>
<text transform="translate(519.9 527.2) scale(0.78 1)" font-family="Liberation Sans" font-size="5.2" font-style="italic" text-anchor="start" fill="#000" >В (4 : 1)</text>
<text transform="translate(519.9 533.6) scale(0.78 1)" font-family="Liberation Sans" font-size="5.2" font-style="italic" text-anchor="start" fill="#000" >Вар. 2</text>
<clipPath id="blob2"><path d="M516 545.5 L519 540.5 L523 541.5 L527 539 L531 541 L535 538.5 L539 541 L543 540.5 L546 545 L550 546 L551 551 L556 553 L557 558 L560 563 L558 569 L556 574 L557 580 L552 583 L549 589 L543 590 L538 592 L531 589 L526 591 L521 590 L518 587 L512 586 L509 581 L507 575 L508 569 L505 564 L507 558 L506 553 L510 550 L511 546 Z"/></clipPath>
<g clip-path="url(#blob2)"><clipPath id="c21"><path d="M500 538H565V551.5H500Z"/></clipPath><path clip-path="url(#c21)" d="M486.50 551.50L500.00 538.00M491.10 551.50L504.60 538.00M495.70 551.50L509.20 538.00M500.30 551.50L513.80 538.00M504.90 551.50L518.40 538.00M509.50 551.50L523.00 538.00M514.10 551.50L527.60 538.00M518.70 551.50L532.20 538.00M523.30 551.50L536.80 538.00M527.90 551.50L541.40 538.00M532.50 551.50L546.00 538.00M537.10 551.50L550.60 538.00M541.70 551.50L555.20 538.00M546.30 551.50L559.80 538.00M550.90 551.50L564.40 538.00M555.50 551.50L569.00 538.00M560.10 551.50L573.60 538.00M564.70 551.50L578.20 538.00M486.50 538.00L500.00 551.50M491.10 538.00L504.60 551.50M495.70 538.00L509.20 551.50M500.30 538.00L513.80 551.50M504.90 538.00L518.40 551.50M509.50 538.00L523.00 551.50M514.10 538.00L527.60 551.50M518.70 538.00L532.20 551.50M523.30 538.00L536.80 551.50M527.90 538.00L541.40 551.50M532.50 538.00L546.00 551.50M537.10 538.00L550.60 551.50M541.70 538.00L555.20 551.50M546.30 538.00L559.80 551.50M550.90 538.00L564.40 551.50M555.50 538.00L569.00 551.50M560.10 538.00L573.60 551.50M564.70 538.00L578.20 551.50" stroke="#000" stroke-width="0.68" fill="none"/><clipPath id="c22"><path d="M500 582H565V595H500Z"/></clipPath><path clip-path="url(#c22)" d="M487.00 595.00L500.00 582.00M491.60 595.00L504.60 582.00M496.20 595.00L509.20 582.00M500.80 595.00L513.80 582.00M505.40 595.00L518.40 582.00M510.00 595.00L523.00 582.00M514.60 595.00L527.60 582.00M519.20 595.00L532.20 582.00M523.80 595.00L536.80 582.00M528.40 595.00L541.40 582.00M533.00 595.00L546.00 582.00M537.60 595.00L550.60 582.00M542.20 595.00L555.20 582.00M546.80 595.00L559.80 582.00M551.40 595.00L564.40 582.00M556.00 595.00L569.00 582.00M560.60 595.00L573.60 582.00M487.00 582.00L500.00 595.00M491.60 582.00L504.60 595.00M496.20 582.00L509.20 595.00M500.80 582.00L513.80 595.00M505.40 582.00L518.40 595.00M510.00 582.00L523.00 595.00M514.60 582.00L527.60 595.00M519.20 582.00L532.20 595.00M523.80 582.00L536.80 595.00M528.40 582.00L541.40 595.00M533.00 582.00L546.00 595.00M537.60 582.00L550.60 595.00M542.20 582.00L555.20 595.00M546.80 582.00L559.80 595.00M551.40 582.00L564.40 595.00M556.00 582.00L569.00 595.00M560.60 582.00L573.60 595.00" stroke="#000" stroke-width="0.68" fill="none"/><clipPath id="c23"><path d="M500 551.5H541.5V582H500Z"/></clipPath><path clip-path="url(#c23)" d="M469.50 551.50L500.00 582.00M473.50 551.50L504.00 582.00M477.50 551.50L508.00 582.00M481.50 551.50L512.00 582.00M485.50 551.50L516.00 582.00M489.50 551.50L520.00 582.00M493.50 551.50L524.00 582.00M497.50 551.50L528.00 582.00M501.50 551.50L532.00 582.00M505.50 551.50L536.00 582.00M509.50 551.50L540.00 582.00M513.50 551.50L544.00 582.00M517.50 551.50L548.00 582.00M521.50 551.50L552.00 582.00M525.50 551.50L556.00 582.00M529.50 551.50L560.00 582.00M533.50 551.50L564.00 582.00M537.50 551.50L568.00 582.00M541.50 551.50L572.00 582.00" stroke="#000" stroke-width="0.72" fill="none"/><path d="M500 551.5 H565 M500 582 H565" fill="none" stroke="#000" stroke-width="1.0" /><path d="M541.5 551.5 V582" fill="none" stroke="#000" stroke-width="0.7" /></g>
<path d="M516 545.5 L519 540.5 L523 541.5 L527 539 L531 541 L535 538.5 L539 541 L543 540.5 L546 545 L550 546 L551 551 L556 553 L557 558 L560 563 L558 569 L556 574 L557 580 L552 583 L549 589 L543 590 L538 592 L531 589 L526 591 L521 590 L518 587 L512 586 L509 581 L507 575 L508 569 L505 564 L507 558 L506 553 L510 550 L511 546 Z" fill="none" stroke="#000" stroke-width="0.55" />
<path d="M499 566 H562" fill="none" stroke="#000" stroke-width="0.5" stroke-dasharray="6 1 1 1"/>
<path d="M536 563 V598.5 M542 563 V598.5 M536 563 H556 M536 568.5 H556 M530 598 H547" fill="none" stroke="#000" stroke-width="0.6" />
<path d="M550 557 V575" fill="none" stroke="#000" stroke-width="0.5" />
<text transform="translate(668 523.4) scale(0.86 1)" font-family="Liberation Sans" font-size="5.6" font-style="italic" text-anchor="start" fill="#000" >Б–Б (3 : 1)</text>
<clipPath id="bbody"><path d="M644.7 531.9 H739.2 V599.4 L735 598 L731 592 L727 599 L722 592 L717 587 L712 584 L707 590 L702 598 L697 594 L690 598 L680 597 L670 593 L660 592 L650 590 L644.7 590 Z"/></clipPath>
<g clip-path="url(#bbody)"><rect x="644.7" y="531.9" width="94.50" height="68.10" fill="#fff" stroke="#000" stroke-width="0"/><clipPath id="c24"><path d="M644.7 531.9H660V542.7H700V551.5H649V569H700V577H660V600H644.7Z"/></clipPath><path clip-path="url(#c24)" d="M575.00 600.00L644.00 531.00M578.80 600.00L647.80 531.00M582.60 600.00L651.60 531.00M586.40 600.00L655.40 531.00M590.20 600.00L659.20 531.00M594.00 600.00L663.00 531.00M597.80 600.00L666.80 531.00M601.60 600.00L670.60 531.00M605.40 600.00L674.40 531.00M609.20 600.00L678.20 531.00M613.00 600.00L682.00 531.00M616.80 600.00L685.80 531.00M620.60 600.00L689.60 531.00M624.40 600.00L693.40 531.00M628.20 600.00L697.20 531.00M632.00 600.00L701.00 531.00M635.80 600.00L704.80 531.00M639.60 600.00L708.60 531.00M643.40 600.00L712.40 531.00M647.20 600.00L716.20 531.00M651.00 600.00L720.00 531.00M654.80 600.00L723.80 531.00M658.60 600.00L727.60 531.00M662.40 600.00L731.40 531.00M666.20 600.00L735.20 531.00M670.00 600.00L739.00 531.00M673.80 600.00L742.80 531.00M677.60 600.00L746.60 531.00M681.40 600.00L750.40 531.00M685.20 600.00L754.20 531.00M689.00 600.00L758.00 531.00M692.80 600.00L761.80 531.00M696.60 600.00L765.60 531.00M700.40 600.00L769.40 531.00M575.00 531.00L644.00 600.00M578.80 531.00L647.80 600.00M582.60 531.00L651.60 600.00M586.40 531.00L655.40 600.00M590.20 531.00L659.20 600.00M594.00 531.00L663.00 600.00M597.80 531.00L666.80 600.00M601.60 531.00L670.60 600.00M605.40 531.00L674.40 600.00M609.20 531.00L678.20 600.00M613.00 531.00L682.00 600.00M616.80 531.00L685.80 600.00M620.60 531.00L689.60 600.00M624.40 531.00L693.40 600.00M628.20 531.00L697.20 600.00M632.00 531.00L701.00 600.00M635.80 531.00L704.80 600.00M639.60 531.00L708.60 600.00M643.40 531.00L712.40 600.00M647.20 531.00L716.20 600.00M651.00 531.00L720.00 600.00M654.80 531.00L723.80 600.00M658.60 531.00L727.60 600.00M662.40 531.00L731.40 600.00M666.20 531.00L735.20 600.00M670.00 531.00L739.00 600.00M673.80 531.00L742.80 600.00M677.60 531.00L746.60 600.00M681.40 531.00L750.40 600.00M685.20 531.00L754.20 600.00M689.00 531.00L758.00 600.00M692.80 531.00L761.80 600.00M696.60 531.00L765.60 600.00M700.40 531.00L769.40 600.00" stroke="#000" stroke-width="0.8" fill="none"/><clipPath id="c25"><path d="M660 531.9H681.6V542.7H660Z"/></clipPath><path clip-path="url(#c25)" d="M649.20 531.90L660.00 542.70M653.20 531.90L664.00 542.70M657.20 531.90L668.00 542.70M661.20 531.90L672.00 542.70M665.20 531.90L676.00 542.70M669.20 531.90L680.00 542.70M673.20 531.90L684.00 542.70M677.20 531.90L688.00 542.70M681.20 531.90L692.00 542.70" stroke="#000" stroke-width="0.72" fill="none"/><clipPath id="c26"><path d="M660 577H681.6V600H660Z"/></clipPath><path clip-path="url(#c26)" d="M637.00 577.00L660.00 600.00M641.00 577.00L664.00 600.00M645.00 577.00L668.00 600.00M649.00 577.00L672.00 600.00M653.00 577.00L676.00 600.00M657.00 577.00L680.00 600.00M661.00 577.00L684.00 600.00M665.00 577.00L688.00 600.00M669.00 577.00L692.00 600.00M673.00 577.00L696.00 600.00M677.00 577.00L700.00 600.00M681.00 577.00L704.00 600.00" stroke="#000" stroke-width="0.72" fill="none"/><clipPath id="c27"><path d="M681.6 531.9H694.2V542.7H681.6Z"/></clipPath><path clip-path="url(#c27)" d="M670.80 542.70L681.60 531.90M672.50 542.70L683.30 531.90M674.20 542.70L685.00 531.90M675.90 542.70L686.70 531.90M677.60 542.70L688.40 531.90M679.30 542.70L690.10 531.90M681.00 542.70L691.80 531.90M682.70 542.70L693.50 531.90M684.40 542.70L695.20 531.90M686.10 542.70L696.90 531.90M687.80 542.70L698.60 531.90M689.50 542.70L700.30 531.90M691.20 542.70L702.00 531.90M692.90 542.70L703.70 531.90M670.80 531.90L681.60 542.70M672.50 531.90L683.30 542.70M674.20 531.90L685.00 542.70M675.90 531.90L686.70 542.70M677.60 531.90L688.40 542.70M679.30 531.90L690.10 542.70M681.00 531.90L691.80 542.70M682.70 531.90L693.50 542.70M684.40 531.90L695.20 542.70M686.10 531.90L696.90 542.70M687.80 531.90L698.60 542.70M689.50 531.90L700.30 542.70M691.20 531.90L702.00 542.70M692.90 531.90L703.70 542.70" stroke="#000" stroke-width="0.62" fill="none"/><clipPath id="c28"><path d="M681.6 577H694.2V600H681.6Z"/></clipPath><path clip-path="url(#c28)" d="M658.60 600.00L681.60 577.00M660.30 600.00L683.30 577.00M662.00 600.00L685.00 577.00M663.70 600.00L686.70 577.00M665.40 600.00L688.40 577.00M667.10 600.00L690.10 577.00M668.80 600.00L691.80 577.00M670.50 600.00L693.50 577.00M672.20 600.00L695.20 577.00M673.90 600.00L696.90 577.00M675.60 600.00L698.60 577.00M677.30 600.00L700.30 577.00M679.00 600.00L702.00 577.00M680.70 600.00L703.70 577.00M682.40 600.00L705.40 577.00M684.10 600.00L707.10 577.00M685.80 600.00L708.80 577.00M687.50 600.00L710.50 577.00M689.20 600.00L712.20 577.00M690.90 600.00L713.90 577.00M692.60 600.00L715.60 577.00M658.60 577.00L681.60 600.00M660.30 577.00L683.30 600.00M662.00 577.00L685.00 600.00M663.70 577.00L686.70 600.00M665.40 577.00L688.40 600.00M667.10 577.00L690.10 600.00M668.80 577.00L691.80 600.00M670.50 577.00L693.50 600.00M672.20 577.00L695.20 600.00M673.90 577.00L696.90 600.00M675.60 577.00L698.60 600.00M677.30 577.00L700.30 600.00M679.00 577.00L702.00 600.00M680.70 577.00L703.70 600.00M682.40 577.00L705.40 600.00M684.10 577.00L707.10 600.00M685.80 577.00L708.80 600.00M687.50 577.00L710.50 600.00M689.20 577.00L712.20 600.00M690.90 577.00L713.90 600.00M692.60 577.00L715.60 600.00" stroke="#000" stroke-width="0.62" fill="none"/><clipPath id="c29"><path d="M694.2 531.9H704V545H694.2Z"/></clipPath><path clip-path="url(#c29)" d="M681.10 545.00L694.20 531.90M684.50 545.00L697.60 531.90M687.90 545.00L701.00 531.90M691.30 545.00L704.40 531.90M694.70 545.00L707.80 531.90M698.10 545.00L711.20 531.90M701.50 545.00L714.60 531.90M681.10 531.90L694.20 545.00M684.50 531.90L697.60 545.00M687.90 531.90L701.00 545.00M691.30 531.90L704.40 545.00M694.70 531.90L707.80 545.00M698.10 531.90L711.20 545.00M701.50 531.90L714.60 545.00" stroke="#000" stroke-width="0.62" fill="none"/><clipPath id="c30"><path d="M694.2 575H704V600H694.2Z"/></clipPath><path clip-path="url(#c30)" d="M669.20 600.00L694.20 575.00M672.60 600.00L697.60 575.00M676.00 600.00L701.00 575.00M679.40 600.00L704.40 575.00M682.80 600.00L707.80 575.00M686.20 600.00L711.20 575.00M689.60 600.00L714.60 575.00M693.00 600.00L718.00 575.00M696.40 600.00L721.40 575.00M699.80 600.00L724.80 575.00M703.20 600.00L728.20 575.00M669.20 575.00L694.20 600.00M672.60 575.00L697.60 600.00M676.00 575.00L701.00 600.00M679.40 575.00L704.40 600.00M682.80 575.00L707.80 600.00M686.20 575.00L711.20 600.00M689.60 575.00L714.60 600.00M693.00 575.00L718.00 600.00M696.40 575.00L721.40 600.00M699.80 575.00L724.80 600.00M703.20 575.00L728.20 600.00" stroke="#000" stroke-width="0.62" fill="none"/><clipPath id="c31"><path d="M704 531.9H739.2V600H704V575H718V576H735V546H718V545H704Z"/></clipPath><path clip-path="url(#c31)" d="M635.90 600.00L704.00 531.90M640.90 600.00L709.00 531.90M645.90 600.00L714.00 531.90M650.90 600.00L719.00 531.90M655.90 600.00L724.00 531.90M660.90 600.00L729.00 531.90M665.90 600.00L734.00 531.90M670.90 600.00L739.00 531.90M675.90 600.00L744.00 531.90M680.90 600.00L749.00 531.90M685.90 600.00L754.00 531.90M690.90 600.00L759.00 531.90M695.90 600.00L764.00 531.90M700.90 600.00L769.00 531.90M705.90 600.00L774.00 531.90M710.90 600.00L779.00 531.90M715.90 600.00L784.00 531.90M720.90 600.00L789.00 531.90M725.90 600.00L794.00 531.90M730.90 600.00L799.00 531.90M735.90 600.00L804.00 531.90" stroke="#000" stroke-width="0.6" fill="none"/><path d="M660 531.9V542.7 M660 577V600 M681.6 531.9V542.7 M681.6 577V600 M694.2 531.9V542.7 M694.2 577V600 M704 531.9V545 M704 575V600" fill="none" stroke="#000" stroke-width="0.8" /><path d="M660 542.7 H700 V551.5 M660 577 H700 V569" fill="none" stroke="#000" stroke-width="0.7" /></g>
<path d="M644.7 531.9 H739.2 V599.4 L735 598 L731 592 L727 599 L722 592 L717 587 L712 584 L707 590 L702 598 L697 594 L690 598 L680 597 L670 593 L660 592 L650 590 L644.7 590 Z" fill="none" stroke="#000" stroke-width="1.0" />
<rect x="649" y="551.5" width="69.00" height="17.50" fill="#fff" stroke="#000" stroke-width="0.9"/>
<path d="M682 551.5 V569" fill="none" stroke="#000" stroke-width="0.6" />
<rect x="718" y="546" width="17.00" height="30.00" fill="#fff" stroke="#000" stroke-width="1.0"/>
<path d="M720 548 H733 V574 H720 Z" fill="none" stroke="#000" stroke-width="0.4" />
<rect x="644.7" y="541.5" width="4.30" height="38.50" fill="#fff" stroke="#000" stroke-width="0.9"/>
<path d="M629.4 545 Q629.4 542.7 632 542.7 H644.7 V576.9 H632 Q629.4 576.9 629.4 574.5 Z" fill="#fff" stroke="#000" stroke-width="1.0" />
<path d="M629.4 551 H644.7 M629.4 569 H644.7" fill="none" stroke="#000" stroke-width="0.55" />
<rect x="617" y="551" width="12.40" height="18.00" fill="#fff" stroke="#000" stroke-width="0.9"/>
<path d="M619 553 V567" fill="none" stroke="#000" stroke-width="0.5" />
<path d="M608 560.2 H745" fill="none" stroke="#000" stroke-width="0.5" stroke-dasharray="8 1.2 1 1.2"/>
<path d="M613 552 V568 M611.5 552 H617 M611.5 568 H617" fill="none" stroke="#000" stroke-width="0.45" />
<text transform="translate(612 560) rotate(-90) scale(0.85 1)" font-family="Liberation Sans" font-size="3" font-style="italic" text-anchor="middle" fill="#000" >М8</text>
<path d="M644.7 590 V604 M660 592 V604 M644.7 603 H660" fill="none" stroke="#000" stroke-width="0.5" />
<text transform="translate(652.3 602) scale(0.85 1)" font-family="Liberation Sans" font-size="3" font-style="italic" text-anchor="middle" fill="#000" >3</text>
<path d="M577.8 510.6 H588.9 L627.5 558.4" fill="none" stroke="#000" stroke-width="0.8" />
<text transform="translate(583.5 507.8) scale(0.75 1)" font-family="Liberation Sans" font-size="5.0" font-style="italic" text-anchor="middle" fill="#000" >14</text>
<path d="M598 510.6 H609.1 L639 556" fill="none" stroke="#000" stroke-width="0.8" />
<text transform="translate(603.8 507.8) scale(0.75 1)" font-family="Liberation Sans" font-size="5.0" font-style="italic" text-anchor="middle" fill="#000" >15</text>
<path d="M615.5 510.6 H626.1 L647.3 547.8" fill="none" stroke="#000" stroke-width="0.8" />
<text transform="translate(621 507.8) scale(0.75 1)" font-family="Liberation Sans" font-size="5.0" font-style="italic" text-anchor="middle" fill="#000" >17</text>
<path d="M634 510.6 H645.9 L651.9 531.3" fill="none" stroke="#000" stroke-width="0.8" />
<text transform="translate(640.2 507.8) scale(0.75 1)" font-family="Liberation Sans" font-size="5.0" font-style="italic" text-anchor="middle" fill="#000" >11</text>
<text transform="translate(849 525.5) scale(0.87 1)" font-family="Liberation Sans" font-size="9.6" font-style="italic" text-anchor="start" fill="#3a3a3a" >Технические характеристики</text>
<text transform="translate(847.4 538.3) scale(0.9 1)" font-family="Liberation Sans" font-size="6.4" font-style="italic" text-anchor="start" fill="#3a3a3a" >1 Тип генератора</text>
<path d="M893.9 537.9 H932.7" fill="none" stroke="#000" stroke-width="0.55" stroke-dasharray="0.55 0.8"/>
<text transform="translate(977.5 538.3) scale(0.88 1)" font-family="Liberation Sans" font-size="6.4" font-style="italic" text-anchor="end" fill="#3a3a3a" >электровзрывной</text>
<text transform="translate(847.4 546.0) scale(0.9 1)" font-family="Liberation Sans" font-size="6.4" font-style="italic" text-anchor="start" fill="#3a3a3a" >2 Режим работы</text>
<path d="M890.8 545.6 H946.6" fill="none" stroke="#000" stroke-width="0.55" stroke-dasharray="0.55 0.8"/>
<text transform="translate(977.5 546.0) scale(0.88 1)" font-family="Liberation Sans" font-size="6.4" font-style="italic" text-anchor="end" fill="#3a3a3a" >импульсный</text>
<text transform="translate(847.4 554.3) scale(0.9 1)" font-family="Liberation Sans" font-size="6.4" font-style="italic" text-anchor="start" fill="#3a3a3a" >3 Диаметр канала</text>
<path d="M894.7 553.9 H962.9" fill="none" stroke="#000" stroke-width="0.55" stroke-dasharray="0.55 0.8"/>
<text transform="translate(977.5 554.3) scale(0.88 1)" font-family="Liberation Sans" font-size="6.4" font-style="italic" text-anchor="end" fill="#3a3a3a" >10 мм</text>
<text transform="translate(847.4 562.0) scale(0.9 1)" font-family="Liberation Sans" font-size="6.4" font-style="italic" text-anchor="start" fill="#3a3a3a" >4 Длина канала</text>
<path d="M888.5 561.6 H963.0" fill="none" stroke="#000" stroke-width="0.55" stroke-dasharray="0.55 0.8"/>
<text transform="translate(977.5 562.0) scale(0.88 1)" font-family="Liberation Sans" font-size="6.4" font-style="italic" text-anchor="end" fill="#3a3a3a" >39 мм</text>
<text transform="translate(847.4 570.0) scale(0.9 1)" font-family="Liberation Sans" font-size="6.4" font-style="italic" text-anchor="start" fill="#3a3a3a" >5 Плазмообразующее вещество</text>
<path d="M929.6 569.6 H950.5" fill="none" stroke="#000" stroke-width="0.55" stroke-dasharray="0.55 0.8"/>
<text transform="translate(977.5 570.0) scale(0.88 1)" font-family="Liberation Sans" font-size="6.4" font-style="italic" text-anchor="end" fill="#3a3a3a" >алюминий</text>
<path d="M847.4 577.5 H907.9" fill="none" stroke="#000" stroke-width="0.55" stroke-dasharray="0.55 0.8"/>
<text transform="translate(977.5 577.9) scale(0.88 1)" font-family="Liberation Sans" font-size="6.4" font-style="italic" text-anchor="end" fill="#3a3a3a" >и порошковые соединения</text>
<text transform="translate(847.4 585.6) scale(0.9 1)" font-family="Liberation Sans" font-size="6.4" font-style="italic" text-anchor="start" fill="#3a3a3a" >6 Объём смеси</text>
<path d="M887.0 585.2 H951.3" fill="none" stroke="#000" stroke-width="0.55" stroke-dasharray="0.55 0.8"/>
<text transform="translate(977.5 585.6) scale(0.88 1)" font-family="Liberation Sans" font-size="6.4" font-style="italic" text-anchor="end" fill="#3a3a3a" >0,242 см³</text>
<text transform="translate(847.4 592.6) scale(0.9 1)" font-family="Liberation Sans" font-size="6.4" font-style="italic" text-anchor="start" fill="#3a3a3a" >7 Рабочее напряжение</text>
<path d="M906.3 592.2 H954.4" fill="none" stroke="#000" stroke-width="0.55" stroke-dasharray="0.55 0.8"/>
<text transform="translate(977.5 592.6) scale(0.88 1)" font-family="Liberation Sans" font-size="6.4" font-style="italic" text-anchor="end" fill="#3a3a3a" >2,5-5 кВ</text>
<path d="M846.3 642.6 V601.75 H984.6" fill="none" stroke="#000" stroke-width="1.1" />
<path d="M851.7 601.75 V642.6" fill="none" stroke="#000" stroke-width="0.9" />
<path d="M859.5 601.75 V642.6" fill="none" stroke="#000" stroke-width="0.9" />
<path d="M876.7 601.75 V642.6" fill="none" stroke="#000" stroke-width="0.9" />
<path d="M887.7 601.75 V642.6" fill="none" stroke="#000" stroke-width="0.9" />
<path d="M894.7 601.75 V642.6" fill="none" stroke="#000" stroke-width="1.1" />
<path d="M846.3 605.5 H894.7" fill="none" stroke="#000" stroke-width="0.5" />
<path d="M846.3 609.25 H894.7" fill="none" stroke="#000" stroke-width="0.5" />
<path d="M846.3 613.0 H894.7" fill="none" stroke="#000" stroke-width="0.5" />
<path d="M846.3 616.75 H894.7" fill="none" stroke="#000" stroke-width="1.0" />
<path d="M846.3 620.5 H894.7" fill="none" stroke="#000" stroke-width="1.0" />
<path d="M846.3 624.25 H894.7" fill="none" stroke="#000" stroke-width="0.5" />
<path d="M846.3 628.0 H894.7" fill="none" stroke="#000" stroke-width="0.5" />
<path d="M846.3 631.75 H894.7" fill="none" stroke="#000" stroke-width="0.5" />
<path d="M846.3 635.5 H894.7" fill="none" stroke="#000" stroke-width="0.5" />
<path d="M846.3 639.25 H894.7" fill="none" stroke="#000" stroke-width="0.5" />
<path d="M894.7 613 H984.6" fill="none" stroke="#000" stroke-width="1.0" />
<path d="M947.25 613 V642.6" fill="none" stroke="#000" stroke-width="1.0" />
<path d="M894.7 631 H947.25" fill="none" stroke="#000" stroke-width="1.0" />
<path d="M947.25 616.4 H984.6 M947.25 628.3 H984.6 M947.25 631.3 H984.6" fill="none" stroke="#000" stroke-width="0.8" />
<path d="M950.7 616.4 V628.3 M954.3 616.4 V628.3 M958.5 613 V631.3 M971.7 613 V628.3" fill="none" stroke="#000" stroke-width="0.8" />
<path d="M965 628.3 V631.3" fill="none" stroke="#000" stroke-width="0.6" />
<text transform="translate(939.8 607.2) scale(0.8 1)" font-family="Liberation Sans" font-size="5.6" font-style="italic" text-anchor="middle" fill="#3a3a3a" >Выпускная квалификационная</text>
<text transform="translate(939.8 612.2) scale(0.8 1)" font-family="Liberation Sans" font-size="5.6" font-style="italic" text-anchor="middle" fill="#3a3a3a" >работа</text>
<text transform="translate(921 619.3) scale(0.82 1)" font-family="Liberation Sans" font-size="4.8" font-style="italic" text-anchor="middle" fill="#3a3a3a" >Электровзрывной</text>
<text transform="translate(921 624.5) scale(0.82 1)" font-family="Liberation Sans" font-size="4.8" font-style="italic" text-anchor="middle" fill="#3a3a3a" >генератор плазмы</text>
<text transform="translate(921 629.8) scale(0.82 1)" font-family="Liberation Sans" font-size="4.8" font-style="italic" text-anchor="middle" fill="#3a3a3a" >Сборочный чертеж</text>
<text transform="translate(965.8 638.2) scale(0.85 1)" font-family="Liberation Sans" font-size="3.4" font-style="italic" text-anchor="middle" fill="#3a3a3a" >РГТУ им. А.Э.Ващрова</text>
<text transform="translate(965.8 641.7) scale(0.85 1)" font-family="Liberation Sans" font-size="3.4" font-style="italic" text-anchor="middle" fill="#3a3a3a" >группа Э8-82Б</text>
<text transform="translate(952.7 615.6) scale(0.85 1)" font-family="Liberation Sans" font-size="2.4" font-style="italic" text-anchor="middle" fill="#3a3a3a" >Лит.</text>
<text transform="translate(965.1 615.6) scale(0.85 1)" font-family="Liberation Sans" font-size="2.4" font-style="italic" text-anchor="middle" fill="#3a3a3a" >Масса</text>
<text transform="translate(978.1 615.6) scale(0.85 1)" font-family="Liberation Sans" font-size="2.4" font-style="italic" text-anchor="middle" fill="#3a3a3a" >Масштаб</text>
<text transform="translate(965.1 623.5) scale(0.85 1)" font-family="Liberation Sans" font-size="3.2" font-style="italic" text-anchor="middle" fill="#3a3a3a" >1:1</text>
<text transform="translate(978.1 623.5) scale(0.85 1)" font-family="Liberation Sans" font-size="3.2" font-style="italic" text-anchor="middle" fill="#3a3a3a" >2:1</text>
<text transform="translate(952.5 630.5) scale(0.85 1)" font-family="Liberation Sans" font-size="2.4" font-style="italic" text-anchor="middle" fill="#3a3a3a" >Лист</text>
<text transform="translate(968 630.5) scale(0.85 1)" font-family="Liberation Sans" font-size="2.4" font-style="italic" text-anchor="middle" fill="#3a3a3a" >Листов</text>
<text transform="translate(849 620) scale(0.8 1)" font-family="Liberation Sans" font-size="2.6" font-style="italic" text-anchor="middle" fill="#3a3a3a" >Изм.</text>
<text transform="translate(855.6 620) scale(0.8 1)" font-family="Liberation Sans" font-size="2.6" font-style="italic" text-anchor="middle" fill="#3a3a3a" >Лист</text>
<text transform="translate(868 620) scale(0.8 1)" font-family="Liberation Sans" font-size="2.6" font-style="italic" text-anchor="middle" fill="#3a3a3a" >№ докум.</text>
<text transform="translate(882.2 620) scale(0.8 1)" font-family="Liberation Sans" font-size="2.6" font-style="italic" text-anchor="middle" fill="#3a3a3a" >Подп.</text>
<text transform="translate(891.2 620) scale(0.8 1)" font-family="Liberation Sans" font-size="2.6" font-style="italic" text-anchor="middle" fill="#3a3a3a" >Дата</text>
<text transform="translate(849 623.7) scale(0.8 1)" font-family="Liberation Sans" font-size="2.6" font-style="italic" text-anchor="middle" fill="#3a3a3a" >Разраб.</text>
<text transform="translate(868 623.7) scale(0.8 1)" font-family="Liberation Sans" font-size="2.6" font-style="italic" text-anchor="middle" fill="#3a3a3a" >Данилов</text>
<text transform="translate(849 627.5) scale(0.8 1)" font-family="Liberation Sans" font-size="2.6" font-style="italic" text-anchor="middle" fill="#3a3a3a" >Пров.</text>
<text transform="translate(868 627.5) scale(0.8 1)" font-family="Liberation Sans" font-size="2.6" font-style="italic" text-anchor="middle" fill="#3a3a3a" >Шаронов</text>
<text transform="translate(849 631.2) scale(0.8 1)" font-family="Liberation Sans" font-size="2.6" font-style="italic" text-anchor="middle" fill="#3a3a3a" >Т.контр.</text>
<text transform="translate(849 635) scale(0.8 1)" font-family="Liberation Sans" font-size="2.6" font-style="italic" text-anchor="middle" fill="#3a3a3a" >Реценз.</text>
<text transform="translate(849 638.7) scale(0.8 1)" font-family="Liberation Sans" font-size="2.6" font-style="italic" text-anchor="middle" fill="#3a3a3a" >Н.контр.</text>
<text transform="translate(849 642.2) scale(0.8 1)" font-family="Liberation Sans" font-size="2.6" font-style="italic" text-anchor="middle" fill="#3a3a3a" >Утв.</text>
<text transform="translate(920 645.3) scale(0.85 1)" font-family="Liberation Sans" font-size="2.8" font-style="italic" text-anchor="middle" fill="#3a3a3a" >Копировал</text>
<text transform="translate(958 645.3) scale(0.85 1)" font-family="Liberation Sans" font-size="2.8" font-style="italic" text-anchor="middle" fill="#3a3a3a" >Формат А3</text>
</svg>
</body></html>
